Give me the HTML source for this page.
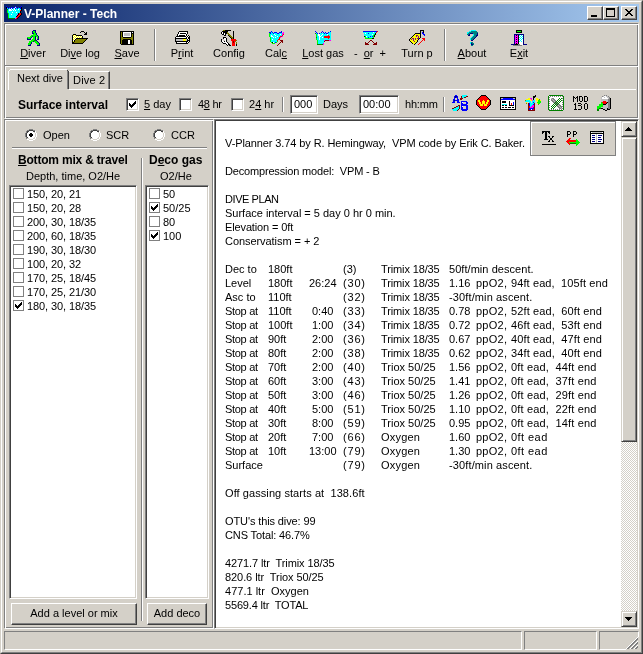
<!DOCTYPE html>
<html><head><meta charset="utf-8">
<style>
*{margin:0;padding:0;box-sizing:border-box}
html,body{width:643px;height:654px;overflow:hidden;background:#d4d0c8}
body{position:relative;font-family:"Liberation Sans",sans-serif;font-size:11px;color:#000}
.a{position:absolute}
.t{position:absolute;white-space:pre;line-height:13px;will-change:transform}
.hd{position:absolute;height:1px;background:#808080}
.hw{position:absolute;height:1px;background:#fff}
.vd{position:absolute;width:1px;background:#808080}
.vw{position:absolute;width:1px;background:#fff}
.sunk{position:absolute;border:1px solid;border-color:#808080 #fff #fff #808080;box-shadow:inset 1px 1px #404040,inset -1px -1px #d4d0c8;background:#fff}
.thin{position:absolute;border:1px solid;border-color:#808080 #fff #fff #808080}
.btn{position:absolute;border:1px solid;border-color:#fff #404040 #404040 #fff;box-shadow:inset -1px -1px #808080;background:#d4d0c8}
.cbtn{position:absolute;border:1px solid;border-color:#d4d0c8 #404040 #404040 #d4d0c8;box-shadow:inset 1px 1px #fff,inset -1px -1px #808080;background:#d4d0c8}

.u{text-decoration:underline;text-underline-offset:1px}
.b{font-weight:bold}
.lcb{position:absolute;width:11px;height:11px;border:1px solid #808080;background:#fff}
.cb{position:absolute;width:13px;height:13px;border:1px solid;border-color:#808080 #fff #fff #808080;box-shadow:inset 1px 1px #404040,inset -1px -1px #d4d0c8;background:#fff}
.lbl{position:absolute;white-space:pre;line-height:13px;text-align:center;will-change:transform}
.ic{position:absolute;width:16px;height:16px}
</style></head><body>
<!-- window frame -->
<div class="a" style="left:0;top:0;width:643px;height:654px;border-top:1px solid #d4d0c8;border-left:1px solid #d4d0c8;border-right:1px solid #404040;border-bottom:1px solid #404040"></div>
<div class="a" style="left:1px;top:1px;width:641px;height:652px;border-top:1px solid #fff;border-left:1px solid #fff;border-right:1px solid #808080;border-bottom:1px solid #808080"></div>
<!-- title bar -->
<div class="a" style="left:4px;top:4px;width:635px;height:18px;background:linear-gradient(to right,#0a246a,#a6caf0)"></div>
<div class="t b" style="left:24px;top:8px;color:#fff;font-size:12px">V-Planner - Tech</div>
<div class="btn" style="left:587px;top:6px;width:16px;height:14px"></div>
<div class="btn" style="left:603px;top:6px;width:16px;height:14px"></div>
<div class="btn" style="left:621px;top:6px;width:16px;height:14px"></div>

<!-- top etched frame -->
<div class="a" style="left:4px;top:23px;width:634px;height:95px;border:1px solid #808080"></div>
<div class="a" style="left:5px;top:24px;width:634px;height:95px;border:1px solid #fff"></div>
<div class="hd" style="left:4px;top:65px;width:634px"></div>
<div class="hw" style="left:5px;top:66px;width:633px"></div>

<!-- toolbar separators -->
<div class="vd" style="left:154px;top:29px;height:32px"></div><div class="vw" style="left:155px;top:29px;height:32px"></div>
<div class="vd" style="left:444px;top:29px;height:32px"></div><div class="vw" style="left:445px;top:29px;height:32px"></div>

<!-- toolbar labels -->
<div class="lbl" style="left:8px;top:47px;width:50px"><span class="u">D</span>iver</div>
<div class="lbl" style="left:55px;top:47px;width:50px">Di<span class="u">v</span>e log</div>
<div class="lbl" style="left:102px;top:47px;width:50px"><span class="u">S</span>ave</div>
<div class="lbl" style="left:157px;top:47px;width:50px">P<span class="u">r</span>int</div>
<div class="lbl" style="left:204px;top:47px;width:50px">Config</div>
<div class="lbl" style="left:251px;top:47px;width:50px">Cal<span class="u">c</span></div>
<div class="lbl" style="left:298px;top:47px;width:50px"><span class="u">L</span>ost gas</div>
<div class="lbl" style="left:345px;top:47px;width:50px">-  <span class="u">o</span>r  +</div>
<div class="lbl" style="left:392px;top:47px;width:50px">Turn p</div>
<div class="lbl" style="left:447px;top:47px;width:50px"><span class="u">A</span>bout</div>
<div class="lbl" style="left:494px;top:47px;width:50px">E<span class="u">x</span>it</div>

<!-- tabs -->
<div class="hw" style="left:69px;top:89px;width:567px"></div>
<div class="a" style="left:69px;top:71px;width:41px;height:18px;border-top:1px solid #fff;border-right:1px solid #404040;box-shadow:inset -1px 0 #808080"></div>
<div class="a" style="left:8px;top:69px;width:61px;height:21px;background:#d4d0c8"></div><div class="hw" style="left:10px;top:69px;width:57px"></div><div class="vw" style="left:8px;top:71px;height:19px"></div><div class="a" style="left:9px;top:70px;width:1px;height:1px;background:#fff"></div><div class="vd" style="left:67px;top:71px;height:18px"></div><div class="a" style="left:68px;top:71px;width:1px;height:18px;background:#404040"></div><div class="a" style="left:67px;top:70px;width:1px;height:1px;background:#404040"></div>
<div class="t" style="left:17px;top:72px">Next dive</div>
<div class="t" style="left:73px;top:74px;letter-spacing:0.2px">Dive 2</div>

<!-- surface interval row -->
<div class="t b" style="left:18px;top:99px;font-size:12px">Surface interval</div>
<div class="cb" style="left:126px;top:98px"></div>
<div class="t" style="left:144px;top:98px"><span class="u">5</span> day</div>
<div class="cb" style="left:179px;top:98px"></div>
<div class="t" style="left:198px;top:98px;letter-spacing:-0.3px">4<span class="u">8</span> hr</div>
<div class="cb" style="left:231px;top:98px"></div>
<div class="t" style="left:249px;top:98px">2<span class="u">4</span> hr</div>
<div class="vd" style="left:282px;top:97px;height:15px"></div><div class="vw" style="left:283px;top:97px;height:15px"></div>
<div class="sunk" style="left:290px;top:95px;width:28px;height:19px"></div>
<div class="t" style="left:294px;top:98px">000</div>
<div class="t" style="left:323px;top:98px">Days</div>
<div class="sunk" style="left:359px;top:95px;width:40px;height:19px"></div>
<div class="t" style="left:363px;top:98px">00:00</div>
<div class="t" style="left:405px;top:98px;letter-spacing:-0.2px">hh:mm</div>
<div class="vd" style="left:443px;top:97px;height:15px"></div><div class="vw" style="left:444px;top:97px;height:15px"></div>

<!-- left panel etched -->
<div class="a" style="left:4px;top:119px;width:209px;height:509px;border:1px solid #808080"></div>
<div class="a" style="left:5px;top:120px;width:209px;height:509px;border:1px solid #fff"></div>
<div class="hd" style="left:12px;top:147px;width:195px"></div>
<div class="hw" style="left:12px;top:148px;width:195px"></div>
<div class="vd" style="left:141px;top:158px;height:463px"></div>
<div class="vw" style="left:142px;top:158px;height:463px"></div>

<div class="t" style="left:43px;top:129px">Open</div>
<div class="t" style="left:106px;top:129px">SCR</div>
<div class="t" style="left:171px;top:129px">CCR</div>
<div class="t b" style="left:18px;top:154px;font-size:12px;letter-spacing:-0.2px"><span class="u">B</span>ottom mix &amp; travel</div>
<div class="t" style="left:26px;top:170px">Depth, time, O2/He</div>
<div class="t b" style="left:149px;top:154px;font-size:12px">D<span class="u">e</span>co gas</div>
<div class="t" style="left:160px;top:170px">O2/He</div>

<div class="sunk" style="left:9px;top:185px;width:128px;height:414px"></div>
<div class="sunk" style="left:145px;top:185px;width:64px;height:414px"></div>

<div class="btn" style="left:11px;top:603px;width:126px;height:22px"></div>
<div class="t" style="left:11px;top:607px;width:126px;text-align:center">Add a level or mix</div>
<div class="btn" style="left:147px;top:603px;width:60px;height:22px"></div>
<div class="t" style="left:147px;top:607px;width:60px;text-align:center">Add deco</div>

<!-- text area -->
<div class="sunk" style="left:214px;top:119px;width:425px;height:510px"></div>

<div class="t" style="left:225px;top:137px;letter-spacing:-0.103px">V-Planner 3.74 by R. Hemingway,  VPM code by Erik C. Baker.</div>
<div class="t" style="left:225px;top:165px;letter-spacing:-0.171px">Decompression model:  VPM - B</div>
<div class="t" style="left:225px;top:193px;letter-spacing:-0.425px">DIVE PLAN</div>
<div class="t" style="left:225px;top:207px;letter-spacing:-0.007px">Surface interval = 5 day 0 hr 0 min.</div>
<div class="t" style="left:225px;top:221px;letter-spacing:-0.129px">Elevation = 0ft</div>
<div class="t" style="left:225px;top:235px;letter-spacing:-0.059px">Conservatism = + 2</div>
<div class="t" style="left:225px;top:487px;letter-spacing:0.076px">Off gassing starts at  138.6ft</div>
<div class="t" style="left:225px;top:515px;letter-spacing:-0.111px">OTU's this dive: 99</div>
<div class="t" style="left:225px;top:529px;letter-spacing:-0.12px">CNS Total: 46.7%</div>
<div class="t" style="left:225px;top:557px;letter-spacing:-0.103px">4271.7 ltr  Trimix 18/35</div>
<div class="t" style="left:225px;top:571px;letter-spacing:-0.076px">820.6 ltr  Triox 50/25</div>
<div class="t" style="left:225px;top:585px;letter-spacing:0.014px">477.1 ltr  Oxygen</div>
<div class="t" style="left:225px;top:599px;letter-spacing:-0.174px">5569.4 ltr  TOTAL</div>
<div class="t" style="left:225px;top:263px;letter-spacing:0.0px">Dec to</div>
<div class="t" style="left:268px;top:263px;letter-spacing:0.0px">180ft</div>
<div class="t" style="left:343px;top:263px;letter-spacing:0.0px">(3)</div>
<div class="t" style="left:381px;top:263px;letter-spacing:-0.128px">Trimix 18/35</div>
<div class="t" style="left:449px;top:263px;letter-spacing:0.05px">50ft/min descent.</div>
<div class="t" style="left:225px;top:277px;letter-spacing:0.0px">Level</div>
<div class="t" style="left:268px;top:277px;letter-spacing:0.0px">180ft</div>
<div class="t" style="left:309px;top:277px;letter-spacing:0.0px">26:24</div>
<div class="t" style="left:343px;top:277px;letter-spacing:0.801px">(30)</div>
<div class="t" style="left:381px;top:277px;letter-spacing:-0.128px">Trimix 18/35</div>
<div class="t" style="left:449px;top:277px;letter-spacing:0.0px">1.16</div>
<div class="t" style="left:476px;top:277px;letter-spacing:0.25px">ppO2,</div>
<div class="t" style="left:511px;top:277px;letter-spacing:0.105px">94ft ead,  105ft end</div>
<div class="t" style="left:225px;top:291px;letter-spacing:0.0px">Asc to</div>
<div class="t" style="left:268px;top:291px;letter-spacing:0.0px">110ft</div>
<div class="t" style="left:343px;top:291px;letter-spacing:0.801px">(32)</div>
<div class="t" style="left:381px;top:291px;letter-spacing:-0.128px">Trimix 18/35</div>
<div class="t" style="left:449px;top:291px;letter-spacing:0.125px">-30ft/min ascent.</div>
<div class="t" style="left:225px;top:305px;letter-spacing:-0.3px">Stop at</div>
<div class="t" style="left:268px;top:305px;letter-spacing:0.0px">110ft</div>
<div class="t" style="left:312px;top:305px;letter-spacing:0.0px">0:40</div>
<div class="t" style="left:343px;top:305px;letter-spacing:0.801px">(33)</div>
<div class="t" style="left:381px;top:305px;letter-spacing:-0.128px">Trimix 18/35</div>
<div class="t" style="left:449px;top:305px;letter-spacing:0.0px">0.78</div>
<div class="t" style="left:476px;top:305px;letter-spacing:0.25px">ppO2,</div>
<div class="t" style="left:511px;top:305px;letter-spacing:0.122px">52ft ead,  60ft end</div>
<div class="t" style="left:225px;top:319px;letter-spacing:-0.3px">Stop at</div>
<div class="t" style="left:268px;top:319px;letter-spacing:0.0px">100ft</div>
<div class="t" style="left:312px;top:319px;letter-spacing:0.0px">1:00</div>
<div class="t" style="left:343px;top:319px;letter-spacing:0.801px">(34)</div>
<div class="t" style="left:381px;top:319px;letter-spacing:-0.128px">Trimix 18/35</div>
<div class="t" style="left:449px;top:319px;letter-spacing:0.0px">0.72</div>
<div class="t" style="left:476px;top:319px;letter-spacing:0.25px">ppO2,</div>
<div class="t" style="left:511px;top:319px;letter-spacing:0.122px">46ft ead,  53ft end</div>
<div class="t" style="left:225px;top:333px;letter-spacing:-0.3px">Stop at</div>
<div class="t" style="left:268px;top:333px;letter-spacing:0.0px">90ft</div>
<div class="t" style="left:312px;top:333px;letter-spacing:0.0px">2:00</div>
<div class="t" style="left:343px;top:333px;letter-spacing:0.801px">(36)</div>
<div class="t" style="left:381px;top:333px;letter-spacing:-0.128px">Trimix 18/35</div>
<div class="t" style="left:449px;top:333px;letter-spacing:0.0px">0.67</div>
<div class="t" style="left:476px;top:333px;letter-spacing:0.25px">ppO2,</div>
<div class="t" style="left:511px;top:333px;letter-spacing:0.122px">40ft ead,  47ft end</div>
<div class="t" style="left:225px;top:347px;letter-spacing:-0.3px">Stop at</div>
<div class="t" style="left:268px;top:347px;letter-spacing:0.0px">80ft</div>
<div class="t" style="left:312px;top:347px;letter-spacing:0.0px">2:00</div>
<div class="t" style="left:343px;top:347px;letter-spacing:0.801px">(38)</div>
<div class="t" style="left:381px;top:347px;letter-spacing:-0.128px">Trimix 18/35</div>
<div class="t" style="left:449px;top:347px;letter-spacing:0.0px">0.62</div>
<div class="t" style="left:476px;top:347px;letter-spacing:0.25px">ppO2,</div>
<div class="t" style="left:511px;top:347px;letter-spacing:0.122px">34ft ead,  40ft end</div>
<div class="t" style="left:225px;top:361px;letter-spacing:-0.3px">Stop at</div>
<div class="t" style="left:268px;top:361px;letter-spacing:0.0px">70ft</div>
<div class="t" style="left:312px;top:361px;letter-spacing:0.0px">2:00</div>
<div class="t" style="left:343px;top:361px;letter-spacing:0.801px">(40)</div>
<div class="t" style="left:381px;top:361px;letter-spacing:0.0px">Triox 50/25</div>
<div class="t" style="left:449px;top:361px;letter-spacing:0.0px">1.56</div>
<div class="t" style="left:476px;top:361px;letter-spacing:0.25px">ppO2,</div>
<div class="t" style="left:511px;top:361px;letter-spacing:0.165px">0ft ead,  44ft end</div>
<div class="t" style="left:225px;top:375px;letter-spacing:-0.3px">Stop at</div>
<div class="t" style="left:268px;top:375px;letter-spacing:0.0px">60ft</div>
<div class="t" style="left:312px;top:375px;letter-spacing:0.0px">3:00</div>
<div class="t" style="left:343px;top:375px;letter-spacing:0.801px">(43)</div>
<div class="t" style="left:381px;top:375px;letter-spacing:0.0px">Triox 50/25</div>
<div class="t" style="left:449px;top:375px;letter-spacing:0.0px">1.41</div>
<div class="t" style="left:476px;top:375px;letter-spacing:0.25px">ppO2,</div>
<div class="t" style="left:511px;top:375px;letter-spacing:0.165px">0ft ead,  37ft end</div>
<div class="t" style="left:225px;top:389px;letter-spacing:-0.3px">Stop at</div>
<div class="t" style="left:268px;top:389px;letter-spacing:0.0px">50ft</div>
<div class="t" style="left:312px;top:389px;letter-spacing:0.0px">3:00</div>
<div class="t" style="left:343px;top:389px;letter-spacing:0.801px">(46)</div>
<div class="t" style="left:381px;top:389px;letter-spacing:0.0px">Triox 50/25</div>
<div class="t" style="left:449px;top:389px;letter-spacing:0.0px">1.26</div>
<div class="t" style="left:476px;top:389px;letter-spacing:0.25px">ppO2,</div>
<div class="t" style="left:511px;top:389px;letter-spacing:0.165px">0ft ead,  29ft end</div>
<div class="t" style="left:225px;top:403px;letter-spacing:-0.3px">Stop at</div>
<div class="t" style="left:268px;top:403px;letter-spacing:0.0px">40ft</div>
<div class="t" style="left:312px;top:403px;letter-spacing:0.0px">5:00</div>
<div class="t" style="left:343px;top:403px;letter-spacing:0.801px">(51)</div>
<div class="t" style="left:381px;top:403px;letter-spacing:0.0px">Triox 50/25</div>
<div class="t" style="left:449px;top:403px;letter-spacing:0.0px">1.10</div>
<div class="t" style="left:476px;top:403px;letter-spacing:0.25px">ppO2,</div>
<div class="t" style="left:511px;top:403px;letter-spacing:0.165px">0ft ead,  22ft end</div>
<div class="t" style="left:225px;top:417px;letter-spacing:-0.3px">Stop at</div>
<div class="t" style="left:268px;top:417px;letter-spacing:0.0px">30ft</div>
<div class="t" style="left:312px;top:417px;letter-spacing:0.0px">8:00</div>
<div class="t" style="left:343px;top:417px;letter-spacing:0.801px">(59)</div>
<div class="t" style="left:381px;top:417px;letter-spacing:0.0px">Triox 50/25</div>
<div class="t" style="left:449px;top:417px;letter-spacing:0.0px">0.95</div>
<div class="t" style="left:476px;top:417px;letter-spacing:0.25px">ppO2,</div>
<div class="t" style="left:511px;top:417px;letter-spacing:0.165px">0ft ead,  14ft end</div>
<div class="t" style="left:225px;top:431px;letter-spacing:-0.3px">Stop at</div>
<div class="t" style="left:268px;top:431px;letter-spacing:0.0px">20ft</div>
<div class="t" style="left:312px;top:431px;letter-spacing:0.0px">7:00</div>
<div class="t" style="left:343px;top:431px;letter-spacing:0.801px">(66)</div>
<div class="t" style="left:381px;top:431px;letter-spacing:0.2px">Oxygen</div>
<div class="t" style="left:449px;top:431px;letter-spacing:0.0px">1.60</div>
<div class="t" style="left:476px;top:431px;letter-spacing:0.25px">ppO2,</div>
<div class="t" style="left:511px;top:431px;letter-spacing:0.434px">0ft ead</div>
<div class="t" style="left:225px;top:445px;letter-spacing:-0.3px">Stop at</div>
<div class="t" style="left:268px;top:445px;letter-spacing:0.0px">10ft</div>
<div class="t" style="left:309px;top:445px;letter-spacing:0.0px">13:00</div>
<div class="t" style="left:343px;top:445px;letter-spacing:0.801px">(79)</div>
<div class="t" style="left:381px;top:445px;letter-spacing:0.2px">Oxygen</div>
<div class="t" style="left:449px;top:445px;letter-spacing:0.0px">1.30</div>
<div class="t" style="left:476px;top:445px;letter-spacing:0.25px">ppO2,</div>
<div class="t" style="left:511px;top:445px;letter-spacing:0.434px">0ft ead</div>
<div class="t" style="left:225px;top:459px;letter-spacing:0.0px">Surface</div>
<div class="t" style="left:343px;top:459px;letter-spacing:0.801px">(79)</div>
<div class="t" style="left:381px;top:459px;letter-spacing:0.2px">Oxygen</div>
<div class="t" style="left:449px;top:459px;letter-spacing:0.125px">-30ft/min ascent.</div>
<!-- scrollbar -->
<div class="a" style="left:621px;top:121px;width:16px;height:506px;background:repeating-conic-gradient(#fff 0 25%,#d4d0c8 0 50%) 0 0/2px 2px"></div>
<div class="cbtn" style="left:621px;top:121px;width:16px;height:16px"></div>
<div class="cbtn" style="left:621px;top:137px;width:16px;height:305px"></div>
<div class="cbtn" style="left:621px;top:611px;width:16px;height:16px"></div>

<!-- floating box -->
<div class="a" style="left:530px;top:121px;width:86px;height:35px;border:1px solid #808080;box-shadow:inset 1px 1px #fff;background:#d4d0c8"></div>

<!-- status bar -->
<div class="thin" style="left:4px;top:631px;width:518px;height:19px"></div>
<div class="thin" style="left:524px;top:631px;width:73px;height:19px"></div>
<div class="thin" style="left:599px;top:631px;width:40px;height:19px"></div>
<svg class="a" style="left:25px;top:129px" width="12" height="12" shape-rendering="crispEdges"><rect x="4" y="0" width="4" height="1" fill="#808080"/><rect x="2" y="1" width="2" height="1" fill="#808080"/><rect x="4" y="1" width="4" height="1" fill="#404040"/><rect x="8" y="1" width="2" height="1" fill="#808080"/><rect x="1" y="2" width="1" height="1" fill="#808080"/><rect x="2" y="2" width="2" height="1" fill="#404040"/><rect x="4" y="2" width="4" height="1" fill="#fff"/><rect x="8" y="2" width="2" height="1" fill="#404040"/><rect x="10" y="2" width="1" height="1" fill="#fff"/><rect x="1" y="3" width="1" height="1" fill="#808080"/><rect x="2" y="3" width="1" height="1" fill="#404040"/><rect x="3" y="3" width="6" height="1" fill="#fff"/><rect x="9" y="3" width="1" height="1" fill="#d4d0c8"/><rect x="10" y="3" width="1" height="1" fill="#fff"/><rect x="0" y="4" width="1" height="1" fill="#808080"/><rect x="1" y="4" width="1" height="1" fill="#404040"/><rect x="2" y="4" width="3" height="1" fill="#fff"/><rect x="5" y="4" width="2" height="1" fill="#000"/><rect x="7" y="4" width="3" height="1" fill="#fff"/><rect x="10" y="4" width="1" height="1" fill="#d4d0c8"/><rect x="11" y="4" width="1" height="1" fill="#fff"/><rect x="0" y="5" width="1" height="1" fill="#808080"/><rect x="1" y="5" width="1" height="1" fill="#404040"/><rect x="2" y="5" width="2" height="1" fill="#fff"/><rect x="4" y="5" width="4" height="1" fill="#000"/><rect x="8" y="5" width="2" height="1" fill="#fff"/><rect x="10" y="5" width="1" height="1" fill="#d4d0c8"/><rect x="11" y="5" width="1" height="1" fill="#fff"/><rect x="0" y="6" width="1" height="1" fill="#808080"/><rect x="1" y="6" width="1" height="1" fill="#404040"/><rect x="2" y="6" width="2" height="1" fill="#fff"/><rect x="4" y="6" width="4" height="1" fill="#000"/><rect x="8" y="6" width="2" height="1" fill="#fff"/><rect x="10" y="6" width="1" height="1" fill="#d4d0c8"/><rect x="11" y="6" width="1" height="1" fill="#fff"/><rect x="0" y="7" width="1" height="1" fill="#808080"/><rect x="1" y="7" width="1" height="1" fill="#404040"/><rect x="2" y="7" width="3" height="1" fill="#fff"/><rect x="5" y="7" width="2" height="1" fill="#000"/><rect x="7" y="7" width="3" height="1" fill="#fff"/><rect x="10" y="7" width="1" height="1" fill="#d4d0c8"/><rect x="11" y="7" width="1" height="1" fill="#fff"/><rect x="1" y="8" width="1" height="1" fill="#808080"/><rect x="2" y="8" width="1" height="1" fill="#404040"/><rect x="3" y="8" width="6" height="1" fill="#fff"/><rect x="9" y="8" width="1" height="1" fill="#d4d0c8"/><rect x="10" y="8" width="1" height="1" fill="#fff"/><rect x="1" y="9" width="1" height="1" fill="#808080"/><rect x="2" y="9" width="2" height="1" fill="#d4d0c8"/><rect x="4" y="9" width="4" height="1" fill="#fff"/><rect x="8" y="9" width="2" height="1" fill="#d4d0c8"/><rect x="10" y="9" width="1" height="1" fill="#fff"/><rect x="2" y="10" width="2" height="1" fill="#fff"/><rect x="4" y="10" width="4" height="1" fill="#d4d0c8"/><rect x="8" y="10" width="2" height="1" fill="#fff"/><rect x="4" y="11" width="4" height="1" fill="#fff"/></svg>
<svg class="a" style="left:89px;top:129px" width="12" height="12" shape-rendering="crispEdges"><rect x="4" y="0" width="4" height="1" fill="#808080"/><rect x="2" y="1" width="2" height="1" fill="#808080"/><rect x="4" y="1" width="4" height="1" fill="#404040"/><rect x="8" y="1" width="2" height="1" fill="#808080"/><rect x="1" y="2" width="1" height="1" fill="#808080"/><rect x="2" y="2" width="2" height="1" fill="#404040"/><rect x="4" y="2" width="4" height="1" fill="#fff"/><rect x="8" y="2" width="2" height="1" fill="#404040"/><rect x="10" y="2" width="1" height="1" fill="#fff"/><rect x="1" y="3" width="1" height="1" fill="#808080"/><rect x="2" y="3" width="1" height="1" fill="#404040"/><rect x="3" y="3" width="6" height="1" fill="#fff"/><rect x="9" y="3" width="1" height="1" fill="#d4d0c8"/><rect x="10" y="3" width="1" height="1" fill="#fff"/><rect x="0" y="4" width="1" height="1" fill="#808080"/><rect x="1" y="4" width="1" height="1" fill="#404040"/><rect x="2" y="4" width="8" height="1" fill="#fff"/><rect x="10" y="4" width="1" height="1" fill="#d4d0c8"/><rect x="11" y="4" width="1" height="1" fill="#fff"/><rect x="0" y="5" width="1" height="1" fill="#808080"/><rect x="1" y="5" width="1" height="1" fill="#404040"/><rect x="2" y="5" width="8" height="1" fill="#fff"/><rect x="10" y="5" width="1" height="1" fill="#d4d0c8"/><rect x="11" y="5" width="1" height="1" fill="#fff"/><rect x="0" y="6" width="1" height="1" fill="#808080"/><rect x="1" y="6" width="1" height="1" fill="#404040"/><rect x="2" y="6" width="8" height="1" fill="#fff"/><rect x="10" y="6" width="1" height="1" fill="#d4d0c8"/><rect x="11" y="6" width="1" height="1" fill="#fff"/><rect x="0" y="7" width="1" height="1" fill="#808080"/><rect x="1" y="7" width="1" height="1" fill="#404040"/><rect x="2" y="7" width="8" height="1" fill="#fff"/><rect x="10" y="7" width="1" height="1" fill="#d4d0c8"/><rect x="11" y="7" width="1" height="1" fill="#fff"/><rect x="1" y="8" width="1" height="1" fill="#808080"/><rect x="2" y="8" width="1" height="1" fill="#404040"/><rect x="3" y="8" width="6" height="1" fill="#fff"/><rect x="9" y="8" width="1" height="1" fill="#d4d0c8"/><rect x="10" y="8" width="1" height="1" fill="#fff"/><rect x="1" y="9" width="1" height="1" fill="#808080"/><rect x="2" y="9" width="2" height="1" fill="#d4d0c8"/><rect x="4" y="9" width="4" height="1" fill="#fff"/><rect x="8" y="9" width="2" height="1" fill="#d4d0c8"/><rect x="10" y="9" width="1" height="1" fill="#fff"/><rect x="2" y="10" width="2" height="1" fill="#fff"/><rect x="4" y="10" width="4" height="1" fill="#d4d0c8"/><rect x="8" y="10" width="2" height="1" fill="#fff"/><rect x="4" y="11" width="4" height="1" fill="#fff"/></svg>
<svg class="a" style="left:153px;top:129px" width="12" height="12" shape-rendering="crispEdges"><rect x="4" y="0" width="4" height="1" fill="#808080"/><rect x="2" y="1" width="2" height="1" fill="#808080"/><rect x="4" y="1" width="4" height="1" fill="#404040"/><rect x="8" y="1" width="2" height="1" fill="#808080"/><rect x="1" y="2" width="1" height="1" fill="#808080"/><rect x="2" y="2" width="2" height="1" fill="#404040"/><rect x="4" y="2" width="4" height="1" fill="#fff"/><rect x="8" y="2" width="2" height="1" fill="#404040"/><rect x="10" y="2" width="1" height="1" fill="#fff"/><rect x="1" y="3" width="1" height="1" fill="#808080"/><rect x="2" y="3" width="1" height="1" fill="#404040"/><rect x="3" y="3" width="6" height="1" fill="#fff"/><rect x="9" y="3" width="1" height="1" fill="#d4d0c8"/><rect x="10" y="3" width="1" height="1" fill="#fff"/><rect x="0" y="4" width="1" height="1" fill="#808080"/><rect x="1" y="4" width="1" height="1" fill="#404040"/><rect x="2" y="4" width="8" height="1" fill="#fff"/><rect x="10" y="4" width="1" height="1" fill="#d4d0c8"/><rect x="11" y="4" width="1" height="1" fill="#fff"/><rect x="0" y="5" width="1" height="1" fill="#808080"/><rect x="1" y="5" width="1" height="1" fill="#404040"/><rect x="2" y="5" width="8" height="1" fill="#fff"/><rect x="10" y="5" width="1" height="1" fill="#d4d0c8"/><rect x="11" y="5" width="1" height="1" fill="#fff"/><rect x="0" y="6" width="1" height="1" fill="#808080"/><rect x="1" y="6" width="1" height="1" fill="#404040"/><rect x="2" y="6" width="8" height="1" fill="#fff"/><rect x="10" y="6" width="1" height="1" fill="#d4d0c8"/><rect x="11" y="6" width="1" height="1" fill="#fff"/><rect x="0" y="7" width="1" height="1" fill="#808080"/><rect x="1" y="7" width="1" height="1" fill="#404040"/><rect x="2" y="7" width="8" height="1" fill="#fff"/><rect x="10" y="7" width="1" height="1" fill="#d4d0c8"/><rect x="11" y="7" width="1" height="1" fill="#fff"/><rect x="1" y="8" width="1" height="1" fill="#808080"/><rect x="2" y="8" width="1" height="1" fill="#404040"/><rect x="3" y="8" width="6" height="1" fill="#fff"/><rect x="9" y="8" width="1" height="1" fill="#d4d0c8"/><rect x="10" y="8" width="1" height="1" fill="#fff"/><rect x="1" y="9" width="1" height="1" fill="#808080"/><rect x="2" y="9" width="2" height="1" fill="#d4d0c8"/><rect x="4" y="9" width="4" height="1" fill="#fff"/><rect x="8" y="9" width="2" height="1" fill="#d4d0c8"/><rect x="10" y="9" width="1" height="1" fill="#fff"/><rect x="2" y="10" width="2" height="1" fill="#fff"/><rect x="4" y="10" width="4" height="1" fill="#d4d0c8"/><rect x="8" y="10" width="2" height="1" fill="#fff"/><rect x="4" y="11" width="4" height="1" fill="#fff"/></svg>
<svg class="a" style="left:129px;top:101px" width="7" height="7" shape-rendering="crispEdges"><rect x="6" y="0" width="1" height="1" fill="#000"/><rect x="5" y="1" width="2" height="1" fill="#000"/><rect x="0" y="2" width="1" height="1" fill="#000"/><rect x="4" y="2" width="3" height="1" fill="#000"/><rect x="0" y="3" width="2" height="1" fill="#000"/><rect x="3" y="3" width="3" height="1" fill="#000"/><rect x="0" y="4" width="5" height="1" fill="#000"/><rect x="1" y="5" width="3" height="1" fill="#000"/><rect x="2" y="6" width="1" height="1" fill="#000"/></svg>
<div class="lcb" style="left:13px;top:188px"></div>
<div class="t" style="left:27px;top:188px;letter-spacing:-0.1px">150, 20, 21</div>
<div class="lcb" style="left:13px;top:202px"></div>
<div class="t" style="left:27px;top:202px;letter-spacing:-0.1px">150, 20, 28</div>
<div class="lcb" style="left:13px;top:216px"></div>
<div class="t" style="left:27px;top:216px;letter-spacing:-0.1px">200, 30, 18/35</div>
<div class="lcb" style="left:13px;top:230px"></div>
<div class="t" style="left:27px;top:230px;letter-spacing:-0.1px">200, 60, 18/35</div>
<div class="lcb" style="left:13px;top:244px"></div>
<div class="t" style="left:27px;top:244px;letter-spacing:-0.1px">190, 30, 18/30</div>
<div class="lcb" style="left:13px;top:258px"></div>
<div class="t" style="left:27px;top:258px;letter-spacing:-0.1px">100, 20, 32</div>
<div class="lcb" style="left:13px;top:272px"></div>
<div class="t" style="left:27px;top:272px;letter-spacing:-0.1px">170, 25, 18/45</div>
<div class="lcb" style="left:13px;top:286px"></div>
<div class="t" style="left:27px;top:286px;letter-spacing:-0.1px">170, 25, 21/30</div>
<div class="lcb" style="left:13px;top:300px"></div>
<svg class="a" style="left:15px;top:302px" width="7" height="7" shape-rendering="crispEdges"><rect x="6" y="0" width="1" height="1" fill="#000"/><rect x="5" y="1" width="2" height="1" fill="#000"/><rect x="0" y="2" width="1" height="1" fill="#000"/><rect x="4" y="2" width="3" height="1" fill="#000"/><rect x="0" y="3" width="2" height="1" fill="#000"/><rect x="3" y="3" width="3" height="1" fill="#000"/><rect x="0" y="4" width="5" height="1" fill="#000"/><rect x="1" y="5" width="3" height="1" fill="#000"/><rect x="2" y="6" width="1" height="1" fill="#000"/></svg>
<div class="t" style="left:27px;top:300px;letter-spacing:-0.1px">180, 30, 18/35</div>
<div class="lcb" style="left:149px;top:188px"></div>
<div class="t" style="left:163px;top:188px">50</div>
<div class="lcb" style="left:149px;top:202px"></div>
<svg class="a" style="left:151px;top:204px" width="7" height="7" shape-rendering="crispEdges"><rect x="6" y="0" width="1" height="1" fill="#000"/><rect x="5" y="1" width="2" height="1" fill="#000"/><rect x="0" y="2" width="1" height="1" fill="#000"/><rect x="4" y="2" width="3" height="1" fill="#000"/><rect x="0" y="3" width="2" height="1" fill="#000"/><rect x="3" y="3" width="3" height="1" fill="#000"/><rect x="0" y="4" width="5" height="1" fill="#000"/><rect x="1" y="5" width="3" height="1" fill="#000"/><rect x="2" y="6" width="1" height="1" fill="#000"/></svg>
<div class="t" style="left:163px;top:202px">50/25</div>
<div class="lcb" style="left:149px;top:216px"></div>
<div class="t" style="left:163px;top:216px">80</div>
<div class="lcb" style="left:149px;top:230px"></div>
<svg class="a" style="left:151px;top:232px" width="7" height="7" shape-rendering="crispEdges"><rect x="6" y="0" width="1" height="1" fill="#000"/><rect x="5" y="1" width="2" height="1" fill="#000"/><rect x="0" y="2" width="1" height="1" fill="#000"/><rect x="4" y="2" width="3" height="1" fill="#000"/><rect x="0" y="3" width="2" height="1" fill="#000"/><rect x="3" y="3" width="3" height="1" fill="#000"/><rect x="0" y="4" width="5" height="1" fill="#000"/><rect x="1" y="5" width="3" height="1" fill="#000"/><rect x="2" y="6" width="1" height="1" fill="#000"/></svg>
<div class="t" style="left:163px;top:230px">100</div>
<svg class="a" style="left:591px;top:15px" width="6" height="2" shape-rendering="crispEdges"><rect x="0" y="0" width="6" height="1" fill="#000"/><rect x="0" y="1" width="6" height="1" fill="#000"/></svg>
<svg class="a" style="left:606px;top:8px" width="9" height="9" shape-rendering="crispEdges"><rect x="0" y="0" width="9" height="1" fill="#000"/><rect x="0" y="1" width="9" height="1" fill="#000"/><rect x="0" y="2" width="1" height="1" fill="#000"/><rect x="8" y="2" width="1" height="1" fill="#000"/><rect x="0" y="3" width="1" height="1" fill="#000"/><rect x="8" y="3" width="1" height="1" fill="#000"/><rect x="0" y="4" width="1" height="1" fill="#000"/><rect x="8" y="4" width="1" height="1" fill="#000"/><rect x="0" y="5" width="1" height="1" fill="#000"/><rect x="8" y="5" width="1" height="1" fill="#000"/><rect x="0" y="6" width="1" height="1" fill="#000"/><rect x="8" y="6" width="1" height="1" fill="#000"/><rect x="0" y="7" width="1" height="1" fill="#000"/><rect x="8" y="7" width="1" height="1" fill="#000"/><rect x="0" y="8" width="9" height="1" fill="#000"/></svg>
<svg class="a" style="left:625px;top:9px" width="8" height="7" shape-rendering="crispEdges"><rect x="0" y="0" width="2" height="1" fill="#000"/><rect x="6" y="0" width="2" height="1" fill="#000"/><rect x="1" y="1" width="2" height="1" fill="#000"/><rect x="5" y="1" width="2" height="1" fill="#000"/><rect x="2" y="2" width="4" height="1" fill="#000"/><rect x="3" y="3" width="2" height="1" fill="#000"/><rect x="2" y="4" width="4" height="1" fill="#000"/><rect x="1" y="5" width="2" height="1" fill="#000"/><rect x="5" y="5" width="2" height="1" fill="#000"/><rect x="0" y="6" width="2" height="1" fill="#000"/><rect x="6" y="6" width="2" height="1" fill="#000"/></svg>
<svg class="a" style="left:625px;top:127px" width="7" height="4" shape-rendering="crispEdges"><rect x="3" y="0" width="1" height="1" fill="#000"/><rect x="2" y="1" width="3" height="1" fill="#000"/><rect x="1" y="2" width="5" height="1" fill="#000"/><rect x="0" y="3" width="7" height="1" fill="#000"/></svg>
<svg class="a" style="left:625px;top:617px" width="7" height="4" shape-rendering="crispEdges"><rect x="0" y="0" width="7" height="1" fill="#000"/><rect x="1" y="1" width="5" height="1" fill="#000"/><rect x="2" y="2" width="3" height="1" fill="#000"/><rect x="3" y="3" width="1" height="1" fill="#000"/></svg>
<svg class="a" style="left:6px;top:6px" width="16" height="13" shape-rendering="crispEdges"><rect x="0" y="0" width="1" height="1" fill="#0000ff"/><rect x="9" y="0" width="1" height="1" fill="#0000ff"/><rect x="15" y="0" width="1" height="1" fill="#0000ff"/><rect x="0" y="1" width="1" height="1" fill="#000"/><rect x="1" y="1" width="1" height="1" fill="#0000ff"/><rect x="3" y="1" width="1" height="1" fill="#0000ff"/><rect x="5" y="1" width="2" height="1" fill="#0000ff"/><rect x="8" y="1" width="1" height="1" fill="#0000ff"/><rect x="9" y="1" width="1" height="1" fill="#fff"/><rect x="10" y="1" width="1" height="1" fill="#0000ff"/><rect x="12" y="1" width="1" height="1" fill="#0000ff"/><rect x="14" y="1" width="1" height="1" fill="#0000ff"/><rect x="15" y="1" width="1" height="1" fill="#000"/><rect x="0" y="2" width="1" height="1" fill="#000"/><rect x="1" y="2" width="1" height="1" fill="#00ffff"/><rect x="2" y="2" width="1" height="1" fill="#0000ff"/><rect x="3" y="2" width="1" height="1" fill="#00ffff"/><rect x="4" y="2" width="1" height="1" fill="#0000ff"/><rect x="5" y="2" width="1" height="1" fill="#fff"/><rect x="6" y="2" width="1" height="1" fill="#0000ff"/><rect x="7" y="2" width="1" height="1" fill="#00ffff"/><rect x="8" y="2" width="1" height="1" fill="#fff"/><rect x="9" y="2" width="1" height="1" fill="#0000ff"/><rect x="10" y="2" width="1" height="1" fill="#00ffff"/><rect x="11" y="2" width="1" height="1" fill="#0000ff"/><rect x="12" y="2" width="2" height="1" fill="#00ffff"/><rect x="14" y="2" width="1" height="1" fill="#0000ff"/><rect x="15" y="2" width="1" height="1" fill="#000"/><rect x="1" y="3" width="1" height="1" fill="#008000"/><rect x="2" y="3" width="1" height="1" fill="#00ffff"/><rect x="3" y="3" width="2" height="1" fill="#fff"/><rect x="5" y="3" width="1" height="1" fill="#00ffff"/><rect x="6" y="3" width="1" height="1" fill="#fff"/><rect x="7" y="3" width="1" height="1" fill="#00ffff"/><rect x="8" y="3" width="1" height="1" fill="#fff"/><rect x="9" y="3" width="3" height="1" fill="#00ffff"/><rect x="12" y="3" width="1" height="1" fill="#fff"/><rect x="13" y="3" width="2" height="1" fill="#00ffff"/><rect x="15" y="3" width="1" height="1" fill="#000"/><rect x="1" y="4" width="1" height="1" fill="#00ff00"/><rect x="2" y="4" width="1" height="1" fill="#00ffff"/><rect x="3" y="4" width="3" height="1" fill="#fff"/><rect x="6" y="4" width="1" height="1" fill="#00ffff"/><rect x="7" y="4" width="1" height="1" fill="#fff"/><rect x="8" y="4" width="1" height="1" fill="#00ffff"/><rect x="9" y="4" width="1" height="1" fill="#fff"/><rect x="10" y="4" width="4" height="1" fill="#00ffff"/><rect x="14" y="4" width="1" height="1" fill="#ff0000"/><rect x="15" y="4" width="1" height="1" fill="#000"/><rect x="1" y="5" width="1" height="1" fill="#00ff00"/><rect x="2" y="5" width="12" height="1" fill="#00ffff"/><rect x="14" y="5" width="1" height="1" fill="#000"/><rect x="1" y="6" width="1" height="1" fill="#00ff00"/><rect x="2" y="6" width="4" height="1" fill="#00ffff"/><rect x="6" y="6" width="1" height="1" fill="#fff"/><rect x="7" y="6" width="3" height="1" fill="#00ffff"/><rect x="10" y="6" width="1" height="1" fill="#fff"/><rect x="11" y="6" width="3" height="1" fill="#00ffff"/><rect x="14" y="6" width="1" height="1" fill="#000"/><rect x="2" y="7" width="1" height="1" fill="#00ff00"/><rect x="3" y="7" width="9" height="1" fill="#00ffff"/><rect x="12" y="7" width="1" height="1" fill="#000"/><rect x="13" y="7" width="2" height="1" fill="#ff0000"/><rect x="15" y="7" width="1" height="1" fill="#000"/><rect x="2" y="8" width="1" height="1" fill="#00ff00"/><rect x="3" y="8" width="2" height="1" fill="#00ffff"/><rect x="5" y="8" width="1" height="1" fill="#fff"/><rect x="6" y="8" width="5" height="1" fill="#00ffff"/><rect x="11" y="8" width="1" height="1" fill="#ff00ff"/><rect x="12" y="8" width="1" height="1" fill="#000"/><rect x="13" y="8" width="2" height="1" fill="#ff0000"/><rect x="15" y="8" width="1" height="1" fill="#000"/><rect x="2" y="9" width="1" height="1" fill="#00ff00"/><rect x="3" y="9" width="8" height="1" fill="#00ffff"/><rect x="11" y="9" width="1" height="1" fill="#000"/><rect x="12" y="9" width="2" height="1" fill="#ff0000"/><rect x="14" y="9" width="1" height="1" fill="#000"/><rect x="2" y="10" width="1" height="1" fill="#00ff00"/><rect x="3" y="10" width="7" height="1" fill="#00ffff"/><rect x="10" y="10" width="1" height="1" fill="#000"/><rect x="11" y="10" width="2" height="1" fill="#ff0000"/><rect x="13" y="10" width="1" height="1" fill="#000"/><rect x="2" y="11" width="1" height="1" fill="#00ff00"/><rect x="3" y="11" width="7" height="1" fill="#00ffff"/><rect x="10" y="11" width="1" height="1" fill="#ff00ff"/><rect x="11" y="11" width="1" height="1" fill="#ff0000"/><rect x="12" y="11" width="1" height="1" fill="#000"/><rect x="2" y="12" width="7" height="1" fill="#008000"/><rect x="9" y="12" width="1" height="1" fill="#ff00ff"/><rect x="10" y="12" width="1" height="1" fill="#ff0000"/><rect x="11" y="12" width="1" height="1" fill="#000"/></svg>
<svg class="a" style="left:24px;top:30px" width="16" height="16" shape-rendering="crispEdges"><rect x="9" y="0" width="3" height="1" fill="#000080"/><rect x="8" y="1" width="1" height="1" fill="#000080"/><rect x="9" y="1" width="2" height="1" fill="#00ff00"/><rect x="11" y="1" width="1" height="1" fill="#000080"/><rect x="8" y="2" width="1" height="1" fill="#000080"/><rect x="9" y="2" width="2" height="1" fill="#00ff00"/><rect x="11" y="2" width="1" height="1" fill="#000080"/><rect x="8" y="3" width="2" height="1" fill="#000080"/><rect x="10" y="3" width="2" height="1" fill="#00ff00"/><rect x="12" y="3" width="1" height="1" fill="#000080"/><rect x="9" y="4" width="3" height="1" fill="#00ff00"/><rect x="12" y="4" width="1" height="1" fill="#000080"/><rect x="7" y="5" width="6" height="1" fill="#00ff00"/><rect x="13" y="5" width="1" height="1" fill="#000080"/><rect x="6" y="6" width="2" height="1" fill="#00ff00"/><rect x="8" y="6" width="1" height="1" fill="#000080"/><rect x="9" y="6" width="2" height="1" fill="#00ff00"/><rect x="11" y="6" width="1" height="1" fill="#000080"/><rect x="12" y="6" width="2" height="1" fill="#00ff00"/><rect x="14" y="6" width="1" height="1" fill="#000080"/><rect x="3" y="7" width="4" height="1" fill="#00ff00"/><rect x="7" y="7" width="1" height="1" fill="#000080"/><rect x="9" y="7" width="2" height="1" fill="#00ff00"/><rect x="11" y="7" width="1" height="1" fill="#000080"/><rect x="13" y="7" width="1" height="1" fill="#00ff00"/><rect x="14" y="7" width="1" height="1" fill="#000080"/><rect x="3" y="8" width="1" height="1" fill="#000080"/><rect x="4" y="8" width="2" height="1" fill="#00ff00"/><rect x="6" y="8" width="1" height="1" fill="#000080"/><rect x="9" y="8" width="2" height="1" fill="#00ff00"/><rect x="11" y="8" width="1" height="1" fill="#000080"/><rect x="13" y="8" width="1" height="1" fill="#00ff00"/><rect x="14" y="8" width="1" height="1" fill="#000080"/><rect x="3" y="9" width="4" height="1" fill="#000080"/><rect x="8" y="9" width="3" height="1" fill="#00ff00"/><rect x="11" y="9" width="1" height="1" fill="#000080"/><rect x="13" y="9" width="2" height="1" fill="#000080"/><rect x="7" y="10" width="3" height="1" fill="#00ff00"/><rect x="10" y="10" width="2" height="1" fill="#008000"/><rect x="12" y="10" width="1" height="1" fill="#000080"/><rect x="5" y="11" width="4" height="1" fill="#00ff00"/><rect x="9" y="11" width="1" height="1" fill="#000080"/><rect x="10" y="11" width="3" height="1" fill="#00ff00"/><rect x="13" y="11" width="1" height="1" fill="#000080"/><rect x="5" y="12" width="2" height="1" fill="#00ff00"/><rect x="7" y="12" width="1" height="1" fill="#000080"/><rect x="11" y="12" width="3" height="1" fill="#00ff00"/><rect x="14" y="12" width="1" height="1" fill="#000080"/><rect x="4" y="13" width="3" height="1" fill="#00ff00"/><rect x="7" y="13" width="1" height="1" fill="#000080"/><rect x="12" y="13" width="3" height="1" fill="#00ff00"/><rect x="15" y="13" width="1" height="1" fill="#000080"/><rect x="4" y="14" width="2" height="1" fill="#00ff00"/><rect x="6" y="14" width="1" height="1" fill="#000080"/><rect x="13" y="14" width="2" height="1" fill="#00ff00"/><rect x="15" y="14" width="1" height="1" fill="#000080"/><rect x="4" y="15" width="3" height="1" fill="#000080"/><rect x="13" y="15" width="3" height="1" fill="#000080"/></svg>
<svg class="a" style="left:72px;top:31px" width="16" height="13" shape-rendering="crispEdges"><rect x="9" y="0" width="3" height="1" fill="#000"/><rect x="8" y="1" width="1" height="1" fill="#000"/><rect x="12" y="1" width="1" height="1" fill="#000"/><rect x="14" y="1" width="1" height="1" fill="#000"/><rect x="13" y="2" width="2" height="1" fill="#000"/><rect x="1" y="3" width="3" height="1" fill="#000"/><rect x="12" y="3" width="3" height="1" fill="#000"/><rect x="0" y="4" width="1" height="1" fill="#000"/><rect x="1" y="4" width="1" height="1" fill="#ffff00"/><rect x="2" y="4" width="1" height="1" fill="#fff"/><rect x="3" y="4" width="1" height="1" fill="#ffff00"/><rect x="4" y="4" width="6" height="1" fill="#000"/><rect x="0" y="5" width="1" height="1" fill="#000"/><rect x="1" y="5" width="1" height="1" fill="#fff"/><rect x="2" y="5" width="1" height="1" fill="#ffff00"/><rect x="3" y="5" width="1" height="1" fill="#fff"/><rect x="4" y="5" width="1" height="1" fill="#ffff00"/><rect x="5" y="5" width="1" height="1" fill="#fff"/><rect x="6" y="5" width="1" height="1" fill="#ffff00"/><rect x="7" y="5" width="1" height="1" fill="#fff"/><rect x="8" y="5" width="1" height="1" fill="#ffff00"/><rect x="9" y="5" width="1" height="1" fill="#fff"/><rect x="10" y="5" width="1" height="1" fill="#000"/><rect x="0" y="6" width="1" height="1" fill="#000"/><rect x="1" y="6" width="1" height="1" fill="#ffff00"/><rect x="2" y="6" width="1" height="1" fill="#fff"/><rect x="3" y="6" width="1" height="1" fill="#ffff00"/><rect x="4" y="6" width="1" height="1" fill="#fff"/><rect x="5" y="6" width="1" height="1" fill="#ffff00"/><rect x="6" y="6" width="1" height="1" fill="#fff"/><rect x="7" y="6" width="1" height="1" fill="#ffff00"/><rect x="8" y="6" width="1" height="1" fill="#fff"/><rect x="9" y="6" width="1" height="1" fill="#ffff00"/><rect x="10" y="6" width="1" height="1" fill="#000"/><rect x="0" y="7" width="1" height="1" fill="#000"/><rect x="1" y="7" width="1" height="1" fill="#fff"/><rect x="2" y="7" width="1" height="1" fill="#ffff00"/><rect x="3" y="7" width="1" height="1" fill="#fff"/><rect x="4" y="7" width="12" height="1" fill="#000"/><rect x="0" y="8" width="1" height="1" fill="#000"/><rect x="1" y="8" width="1" height="1" fill="#ffff00"/><rect x="2" y="8" width="1" height="1" fill="#fff"/><rect x="3" y="8" width="1" height="1" fill="#000"/><rect x="4" y="8" width="10" height="1" fill="#808000"/><rect x="14" y="8" width="1" height="1" fill="#000"/><rect x="0" y="9" width="1" height="1" fill="#000"/><rect x="1" y="9" width="1" height="1" fill="#fff"/><rect x="2" y="9" width="1" height="1" fill="#000"/><rect x="3" y="9" width="10" height="1" fill="#808000"/><rect x="13" y="9" width="1" height="1" fill="#000"/><rect x="0" y="10" width="1" height="1" fill="#000"/><rect x="1" y="10" width="1" height="1" fill="#ffff00"/><rect x="2" y="10" width="1" height="1" fill="#000"/><rect x="3" y="10" width="9" height="1" fill="#808000"/><rect x="12" y="10" width="1" height="1" fill="#000"/><rect x="0" y="11" width="2" height="1" fill="#000"/><rect x="2" y="11" width="9" height="1" fill="#808000"/><rect x="11" y="11" width="1" height="1" fill="#000"/><rect x="0" y="12" width="11" height="1" fill="#000"/></svg>
<svg class="a" style="left:120px;top:31px" width="14" height="14" shape-rendering="crispEdges"><rect x="0" y="0" width="14" height="1" fill="#000"/><rect x="0" y="1" width="1" height="1" fill="#000"/><rect x="1" y="1" width="1" height="1" fill="#808000"/><rect x="2" y="1" width="1" height="1" fill="#000"/><rect x="3" y="1" width="8" height="1" fill="#fff"/><rect x="11" y="1" width="1" height="1" fill="#000"/><rect x="12" y="1" width="1" height="1" fill="#fff"/><rect x="13" y="1" width="1" height="1" fill="#000"/><rect x="0" y="2" width="1" height="1" fill="#000"/><rect x="1" y="2" width="1" height="1" fill="#808000"/><rect x="2" y="2" width="1" height="1" fill="#000"/><rect x="3" y="2" width="1" height="1" fill="#fff"/><rect x="4" y="2" width="6" height="1" fill="#c0c0c0"/><rect x="10" y="2" width="1" height="1" fill="#fff"/><rect x="11" y="2" width="3" height="1" fill="#000"/><rect x="0" y="3" width="1" height="1" fill="#000"/><rect x="1" y="3" width="1" height="1" fill="#808000"/><rect x="2" y="3" width="1" height="1" fill="#000"/><rect x="3" y="3" width="1" height="1" fill="#fff"/><rect x="4" y="3" width="6" height="1" fill="#c0c0c0"/><rect x="10" y="3" width="1" height="1" fill="#fff"/><rect x="11" y="3" width="1" height="1" fill="#000"/><rect x="12" y="3" width="1" height="1" fill="#808000"/><rect x="13" y="3" width="1" height="1" fill="#000"/><rect x="0" y="4" width="1" height="1" fill="#000"/><rect x="1" y="4" width="1" height="1" fill="#808000"/><rect x="2" y="4" width="1" height="1" fill="#000"/><rect x="3" y="4" width="1" height="1" fill="#fff"/><rect x="4" y="4" width="6" height="1" fill="#c0c0c0"/><rect x="10" y="4" width="1" height="1" fill="#fff"/><rect x="11" y="4" width="1" height="1" fill="#000"/><rect x="12" y="4" width="1" height="1" fill="#808000"/><rect x="13" y="4" width="1" height="1" fill="#000"/><rect x="0" y="5" width="1" height="1" fill="#000"/><rect x="1" y="5" width="1" height="1" fill="#808000"/><rect x="2" y="5" width="1" height="1" fill="#000"/><rect x="3" y="5" width="8" height="1" fill="#fff"/><rect x="11" y="5" width="1" height="1" fill="#000"/><rect x="12" y="5" width="1" height="1" fill="#808000"/><rect x="13" y="5" width="1" height="1" fill="#000"/><rect x="0" y="6" width="1" height="1" fill="#000"/><rect x="1" y="6" width="2" height="1" fill="#808000"/><rect x="3" y="6" width="8" height="1" fill="#000"/><rect x="11" y="6" width="2" height="1" fill="#808000"/><rect x="13" y="6" width="1" height="1" fill="#000"/><rect x="0" y="7" width="1" height="1" fill="#000"/><rect x="1" y="7" width="12" height="1" fill="#808000"/><rect x="13" y="7" width="1" height="1" fill="#000"/><rect x="0" y="8" width="1" height="1" fill="#000"/><rect x="1" y="8" width="2" height="1" fill="#808000"/><rect x="3" y="8" width="8" height="1" fill="#000"/><rect x="11" y="8" width="2" height="1" fill="#808000"/><rect x="13" y="8" width="1" height="1" fill="#000"/><rect x="0" y="9" width="1" height="1" fill="#000"/><rect x="1" y="9" width="1" height="1" fill="#808000"/><rect x="2" y="9" width="6" height="1" fill="#000"/><rect x="8" y="9" width="2" height="1" fill="#fff"/><rect x="10" y="9" width="2" height="1" fill="#000"/><rect x="12" y="9" width="1" height="1" fill="#808000"/><rect x="13" y="9" width="1" height="1" fill="#000"/><rect x="0" y="10" width="1" height="1" fill="#000"/><rect x="1" y="10" width="1" height="1" fill="#808000"/><rect x="2" y="10" width="6" height="1" fill="#000"/><rect x="8" y="10" width="2" height="1" fill="#fff"/><rect x="10" y="10" width="2" height="1" fill="#000"/><rect x="12" y="10" width="1" height="1" fill="#808000"/><rect x="13" y="10" width="1" height="1" fill="#000"/><rect x="0" y="11" width="1" height="1" fill="#000"/><rect x="1" y="11" width="1" height="1" fill="#808000"/><rect x="2" y="11" width="6" height="1" fill="#000"/><rect x="8" y="11" width="2" height="1" fill="#fff"/><rect x="10" y="11" width="2" height="1" fill="#000"/><rect x="12" y="11" width="1" height="1" fill="#808000"/><rect x="13" y="11" width="1" height="1" fill="#000"/><rect x="0" y="12" width="1" height="1" fill="#000"/><rect x="1" y="12" width="1" height="1" fill="#808000"/><rect x="2" y="12" width="6" height="1" fill="#000"/><rect x="8" y="12" width="2" height="1" fill="#fff"/><rect x="10" y="12" width="2" height="1" fill="#000"/><rect x="12" y="12" width="1" height="1" fill="#808000"/><rect x="13" y="12" width="1" height="1" fill="#000"/><rect x="1" y="13" width="13" height="1" fill="#000"/></svg>
<svg class="a" style="left:174px;top:31px" width="16" height="13" shape-rendering="crispEdges"><rect x="5" y="0" width="9" height="1" fill="#000"/><rect x="4" y="1" width="1" height="1" fill="#000"/><rect x="5" y="1" width="8" height="1" fill="#fff"/><rect x="13" y="1" width="1" height="1" fill="#000"/><rect x="4" y="2" width="1" height="1" fill="#000"/><rect x="5" y="2" width="1" height="1" fill="#fff"/><rect x="6" y="2" width="6" height="1" fill="#000"/><rect x="12" y="2" width="1" height="1" fill="#fff"/><rect x="13" y="2" width="1" height="1" fill="#000"/><rect x="3" y="3" width="1" height="1" fill="#000"/><rect x="4" y="3" width="8" height="1" fill="#fff"/><rect x="12" y="3" width="1" height="1" fill="#000"/><rect x="3" y="4" width="1" height="1" fill="#000"/><rect x="4" y="4" width="1" height="1" fill="#fff"/><rect x="5" y="4" width="6" height="1" fill="#000"/><rect x="11" y="4" width="1" height="1" fill="#fff"/><rect x="12" y="4" width="1" height="1" fill="#000"/><rect x="13" y="4" width="1" height="1" fill="#fff"/><rect x="14" y="4" width="1" height="1" fill="#000"/><rect x="2" y="5" width="10" height="1" fill="#000"/><rect x="12" y="5" width="1" height="1" fill="#fff"/><rect x="13" y="5" width="1" height="1" fill="#000"/><rect x="14" y="5" width="1" height="1" fill="#fff"/><rect x="15" y="5" width="1" height="1" fill="#000"/><rect x="1" y="6" width="1" height="1" fill="#000"/><rect x="2" y="6" width="10" height="1" fill="#fff"/><rect x="12" y="6" width="1" height="1" fill="#000"/><rect x="13" y="6" width="1" height="1" fill="#fff"/><rect x="14" y="6" width="2" height="1" fill="#000"/><rect x="1" y="7" width="12" height="1" fill="#000"/><rect x="13" y="7" width="1" height="1" fill="#fff"/><rect x="14" y="7" width="2" height="1" fill="#000"/><rect x="1" y="8" width="1" height="1" fill="#000"/><rect x="2" y="8" width="7" height="1" fill="#c0c0c0"/><rect x="9" y="8" width="3" height="1" fill="#ffff00"/><rect x="12" y="8" width="1" height="1" fill="#c0c0c0"/><rect x="13" y="8" width="1" height="1" fill="#000"/><rect x="14" y="8" width="1" height="1" fill="#fff"/><rect x="15" y="8" width="1" height="1" fill="#000"/><rect x="1" y="9" width="1" height="1" fill="#000"/><rect x="2" y="9" width="7" height="1" fill="#c0c0c0"/><rect x="9" y="9" width="3" height="1" fill="#ffff00"/><rect x="12" y="9" width="1" height="1" fill="#c0c0c0"/><rect x="13" y="9" width="3" height="1" fill="#000"/><rect x="1" y="10" width="13" height="1" fill="#000"/><rect x="14" y="10" width="1" height="1" fill="#fff"/><rect x="15" y="10" width="1" height="1" fill="#000"/><rect x="2" y="11" width="1" height="1" fill="#000"/><rect x="3" y="11" width="9" height="1" fill="#fff"/><rect x="12" y="11" width="1" height="1" fill="#000"/><rect x="13" y="11" width="1" height="1" fill="#fff"/><rect x="14" y="11" width="1" height="1" fill="#000"/><rect x="2" y="12" width="12" height="1" fill="#000"/></svg>
<svg class="a" style="left:221px;top:30px" width="16" height="16" shape-rendering="crispEdges"><rect x="2" y="0" width="2" height="1" fill="#808000"/><rect x="4" y="0" width="6" height="1" fill="#000"/><rect x="1" y="1" width="6" height="1" fill="#000"/><rect x="12" y="1" width="1" height="1" fill="#000"/><rect x="0" y="2" width="1" height="1" fill="#000"/><rect x="1" y="2" width="1" height="1" fill="#fff"/><rect x="2" y="2" width="4" height="1" fill="#000"/><rect x="6" y="2" width="1" height="1" fill="#808000"/><rect x="12" y="2" width="1" height="1" fill="#000"/><rect x="0" y="3" width="1" height="1" fill="#000"/><rect x="1" y="3" width="1" height="1" fill="#fff"/><rect x="2" y="3" width="1" height="1" fill="#000"/><rect x="3" y="3" width="1" height="1" fill="#fff"/><rect x="4" y="3" width="2" height="1" fill="#000"/><rect x="6" y="3" width="2" height="1" fill="#808000"/><rect x="12" y="3" width="1" height="1" fill="#000"/><rect x="1" y="4" width="2" height="1" fill="#000"/><rect x="3" y="4" width="1" height="1" fill="#fff"/><rect x="4" y="4" width="1" height="1" fill="#000"/><rect x="7" y="4" width="2" height="1" fill="#808000"/><rect x="12" y="4" width="1" height="1" fill="#000"/><rect x="3" y="5" width="2" height="1" fill="#000"/><rect x="7" y="5" width="1" height="1" fill="#000"/><rect x="8" y="5" width="2" height="1" fill="#808000"/><rect x="12" y="5" width="1" height="1" fill="#000"/><rect x="8" y="6" width="1" height="1" fill="#000"/><rect x="9" y="6" width="2" height="1" fill="#808000"/><rect x="12" y="6" width="1" height="1" fill="#000"/><rect x="2" y="7" width="3" height="1" fill="#000"/><rect x="9" y="7" width="1" height="1" fill="#000"/><rect x="10" y="7" width="2" height="1" fill="#808000"/><rect x="12" y="7" width="1" height="1" fill="#000"/><rect x="2" y="8" width="1" height="1" fill="#000"/><rect x="3" y="8" width="2" height="1" fill="#fff"/><rect x="5" y="8" width="1" height="1" fill="#000"/><rect x="10" y="8" width="1" height="1" fill="#000"/><rect x="11" y="8" width="1" height="1" fill="#808000"/><rect x="12" y="8" width="1" height="1" fill="#000"/><rect x="0" y="9" width="1" height="1" fill="#000"/><rect x="3" y="9" width="2" height="1" fill="#fff"/><rect x="5" y="9" width="1" height="1" fill="#000"/><rect x="10" y="9" width="5" height="1" fill="#ff0000"/><rect x="0" y="10" width="1" height="1" fill="#000"/><rect x="1" y="10" width="1" height="1" fill="#fff"/><rect x="4" y="10" width="1" height="1" fill="#fff"/><rect x="5" y="10" width="1" height="1" fill="#000"/><rect x="10" y="10" width="5" height="1" fill="#ff0000"/><rect x="15" y="10" width="1" height="1" fill="#808000"/><rect x="0" y="11" width="1" height="1" fill="#000"/><rect x="1" y="11" width="2" height="1" fill="#fff"/><rect x="3" y="11" width="1" height="1" fill="#000"/><rect x="4" y="11" width="1" height="1" fill="#fff"/><rect x="5" y="11" width="1" height="1" fill="#000"/><rect x="11" y="11" width="1" height="1" fill="#ff0000"/><rect x="12" y="11" width="1" height="1" fill="#800000"/><rect x="13" y="11" width="1" height="1" fill="#ff0000"/><rect x="14" y="11" width="1" height="1" fill="#808000"/><rect x="1" y="12" width="1" height="1" fill="#000"/><rect x="2" y="12" width="4" height="1" fill="#fff"/><rect x="6" y="12" width="1" height="1" fill="#000"/><rect x="11" y="12" width="1" height="1" fill="#ff0000"/><rect x="12" y="12" width="1" height="1" fill="#800000"/><rect x="13" y="12" width="1" height="1" fill="#ff0000"/><rect x="15" y="12" width="1" height="1" fill="#808000"/><rect x="2" y="13" width="3" height="1" fill="#000"/><rect x="5" y="13" width="2" height="1" fill="#fff"/><rect x="7" y="13" width="1" height="1" fill="#000"/><rect x="11" y="13" width="3" height="1" fill="#ff0000"/><rect x="15" y="13" width="1" height="1" fill="#808000"/><rect x="5" y="14" width="1" height="1" fill="#000"/><rect x="6" y="14" width="1" height="1" fill="#fff"/><rect x="7" y="14" width="2" height="1" fill="#000"/><rect x="11" y="14" width="3" height="1" fill="#ff0000"/><rect x="15" y="14" width="1" height="1" fill="#000"/><rect x="6" y="15" width="1" height="1" fill="#000"/><rect x="8" y="15" width="2" height="1" fill="#000"/><rect x="11" y="15" width="3" height="1" fill="#ff0000"/><rect x="15" y="15" width="1" height="1" fill="#000"/></svg>
<svg class="a" style="left:269px;top:31px" width="16" height="15" shape-rendering="crispEdges"><rect x="2" y="0" width="1" height="1" fill="#0000ff"/><rect x="12" y="0" width="1" height="1" fill="#0000ff"/><rect x="0" y="1" width="2" height="1" fill="#0000ff"/><rect x="2" y="1" width="1" height="1" fill="#00ffff"/><rect x="3" y="1" width="1" height="1" fill="#0000ff"/><rect x="5" y="1" width="3" height="1" fill="#0000ff"/><rect x="10" y="1" width="3" height="1" fill="#0000ff"/><rect x="14" y="1" width="1" height="1" fill="#ff00ff"/><rect x="0" y="2" width="1" height="1" fill="#00ff00"/><rect x="1" y="2" width="1" height="1" fill="#0000ff"/><rect x="2" y="2" width="2" height="1" fill="#00ffff"/><rect x="4" y="2" width="1" height="1" fill="#0000ff"/><rect x="5" y="2" width="3" height="1" fill="#00ffff"/><rect x="8" y="2" width="2" height="1" fill="#0000ff"/><rect x="10" y="2" width="3" height="1" fill="#00ffff"/><rect x="13" y="2" width="2" height="1" fill="#ff00ff"/><rect x="0" y="3" width="1" height="1" fill="#00ff00"/><rect x="1" y="3" width="4" height="1" fill="#00ffff"/><rect x="5" y="3" width="1" height="1" fill="#fff"/><rect x="6" y="3" width="5" height="1" fill="#00ffff"/><rect x="11" y="3" width="1" height="1" fill="#fff"/><rect x="12" y="3" width="1" height="1" fill="#00ffff"/><rect x="13" y="3" width="1" height="1" fill="#ff00ff"/><rect x="14" y="3" width="1" height="1" fill="#ff0000"/><rect x="0" y="4" width="1" height="1" fill="#00ff00"/><rect x="1" y="4" width="1" height="1" fill="#00ffff"/><rect x="2" y="4" width="1" height="1" fill="#fff"/><rect x="3" y="4" width="3" height="1" fill="#00ffff"/><rect x="6" y="4" width="1" height="1" fill="#fff"/><rect x="7" y="4" width="6" height="1" fill="#00ffff"/><rect x="13" y="4" width="1" height="1" fill="#ff0000"/><rect x="0" y="5" width="1" height="1" fill="#00ff00"/><rect x="1" y="5" width="1" height="1" fill="#00ffff"/><rect x="2" y="5" width="2" height="1" fill="#fff"/><rect x="4" y="5" width="4" height="1" fill="#00ffff"/><rect x="8" y="5" width="1" height="1" fill="#fff"/><rect x="9" y="5" width="2" height="1" fill="#00ffff"/><rect x="11" y="5" width="2" height="1" fill="#ff0000"/><rect x="13" y="5" width="1" height="1" fill="#ff00ff"/><rect x="1" y="6" width="1" height="1" fill="#00ff00"/><rect x="2" y="6" width="2" height="1" fill="#00ffff"/><rect x="4" y="6" width="1" height="1" fill="#fff"/><rect x="5" y="6" width="1" height="1" fill="#00ffff"/><rect x="6" y="6" width="1" height="1" fill="#fff"/><rect x="7" y="6" width="3" height="1" fill="#00ffff"/><rect x="10" y="6" width="1" height="1" fill="#ff0000"/><rect x="11" y="6" width="1" height="1" fill="#ff00ff"/><rect x="1" y="7" width="1" height="1" fill="#00ff00"/><rect x="2" y="7" width="8" height="1" fill="#00ffff"/><rect x="10" y="7" width="1" height="1" fill="#ff0000"/><rect x="1" y="8" width="1" height="1" fill="#00ff00"/><rect x="2" y="8" width="1" height="1" fill="#00ffff"/><rect x="3" y="8" width="1" height="1" fill="#fff"/><rect x="4" y="8" width="5" height="1" fill="#00ffff"/><rect x="9" y="8" width="2" height="1" fill="#ff0000"/><rect x="1" y="9" width="1" height="1" fill="#00ff00"/><rect x="2" y="9" width="6" height="1" fill="#00ffff"/><rect x="8" y="9" width="1" height="1" fill="#ff0000"/><rect x="11" y="9" width="3" height="1" fill="#800000"/><rect x="1" y="10" width="1" height="1" fill="#00ff00"/><rect x="2" y="10" width="6" height="1" fill="#00ffff"/><rect x="8" y="10" width="1" height="1" fill="#00ff00"/><rect x="12" y="10" width="2" height="1" fill="#800000"/><rect x="2" y="11" width="1" height="1" fill="#00ff00"/><rect x="3" y="11" width="1" height="1" fill="#000"/><rect x="4" y="11" width="1" height="1" fill="#fff"/><rect x="5" y="11" width="1" height="1" fill="#00ffff"/><rect x="6" y="11" width="1" height="1" fill="#0000ff"/><rect x="7" y="11" width="1" height="1" fill="#00ff00"/><rect x="11" y="11" width="1" height="1" fill="#800000"/><rect x="13" y="11" width="1" height="1" fill="#800000"/><rect x="3" y="12" width="3" height="1" fill="#00ff00"/><rect x="10" y="12" width="1" height="1" fill="#800000"/><rect x="9" y="13" width="1" height="1" fill="#800000"/><rect x="8" y="14" width="1" height="1" fill="#800000"/></svg>
<svg class="a" style="left:315px;top:31px" width="16" height="14" shape-rendering="crispEdges"><rect x="0" y="0" width="1" height="1" fill="#0000ff"/><rect x="7" y="0" width="1" height="1" fill="#0000ff"/><rect x="15" y="0" width="1" height="1" fill="#0000ff"/><rect x="1" y="1" width="1" height="1" fill="#0000ff"/><rect x="6" y="1" width="1" height="1" fill="#0000ff"/><rect x="8" y="1" width="1" height="1" fill="#0000ff"/><rect x="10" y="1" width="1" height="1" fill="#0000ff"/><rect x="13" y="1" width="1" height="1" fill="#0000ff"/><rect x="14" y="1" width="2" height="1" fill="#00ffff"/><rect x="0" y="2" width="1" height="1" fill="#008000"/><rect x="1" y="2" width="1" height="1" fill="#00ffff"/><rect x="2" y="2" width="1" height="1" fill="#0000ff"/><rect x="4" y="2" width="1" height="1" fill="#0000ff"/><rect x="5" y="2" width="4" height="1" fill="#00ffff"/><rect x="9" y="2" width="1" height="1" fill="#0000ff"/><rect x="10" y="2" width="1" height="1" fill="#00ffff"/><rect x="11" y="2" width="2" height="1" fill="#0000ff"/><rect x="13" y="2" width="3" height="1" fill="#00ffff"/><rect x="1" y="3" width="1" height="1" fill="#00ff00"/><rect x="2" y="3" width="1" height="1" fill="#00ffff"/><rect x="3" y="3" width="2" height="1" fill="#fff"/><rect x="5" y="3" width="2" height="1" fill="#00ffff"/><rect x="7" y="3" width="1" height="1" fill="#fff"/><rect x="8" y="3" width="4" height="1" fill="#00ffff"/><rect x="12" y="3" width="1" height="1" fill="#fff"/><rect x="13" y="3" width="3" height="1" fill="#00ffff"/><rect x="1" y="4" width="1" height="1" fill="#00ff00"/><rect x="2" y="4" width="1" height="1" fill="#00ffff"/><rect x="3" y="4" width="2" height="1" fill="#fff"/><rect x="5" y="4" width="1" height="1" fill="#00ffff"/><rect x="6" y="4" width="1" height="1" fill="#fff"/><rect x="7" y="4" width="6" height="1" fill="#00ffff"/><rect x="13" y="4" width="1" height="1" fill="#ff0000"/><rect x="14" y="4" width="2" height="1" fill="#00ffff"/><rect x="1" y="5" width="1" height="1" fill="#00ff00"/><rect x="2" y="5" width="2" height="1" fill="#00ffff"/><rect x="4" y="5" width="2" height="1" fill="#fff"/><rect x="6" y="5" width="3" height="1" fill="#00ffff"/><rect x="9" y="5" width="6" height="1" fill="#ff0000"/><rect x="15" y="5" width="1" height="1" fill="#00ffff"/><rect x="1" y="6" width="1" height="1" fill="#008000"/><rect x="2" y="6" width="2" height="1" fill="#00ffff"/><rect x="4" y="6" width="1" height="1" fill="#fff"/><rect x="5" y="6" width="2" height="1" fill="#00ffff"/><rect x="7" y="6" width="1" height="1" fill="#fff"/><rect x="8" y="6" width="1" height="1" fill="#00ffff"/><rect x="9" y="6" width="6" height="1" fill="#ff0000"/><rect x="15" y="6" width="1" height="1" fill="#00ffff"/><rect x="1" y="7" width="1" height="1" fill="#00ff00"/><rect x="2" y="7" width="2" height="1" fill="#00ffff"/><rect x="4" y="7" width="1" height="1" fill="#fff"/><rect x="5" y="7" width="8" height="1" fill="#00ffff"/><rect x="13" y="7" width="1" height="1" fill="#ff0000"/><rect x="14" y="7" width="2" height="1" fill="#00ffff"/><rect x="1" y="8" width="1" height="1" fill="#00ff00"/><rect x="2" y="8" width="2" height="1" fill="#00ffff"/><rect x="4" y="8" width="1" height="1" fill="#fff"/><rect x="5" y="8" width="11" height="1" fill="#00ffff"/><rect x="2" y="9" width="1" height="1" fill="#00ff00"/><rect x="3" y="9" width="6" height="1" fill="#00ffff"/><rect x="9" y="9" width="1" height="1" fill="#ff00ff"/><rect x="10" y="9" width="4" height="1" fill="#800000"/><rect x="14" y="9" width="2" height="1" fill="#ff00ff"/><rect x="2" y="10" width="1" height="1" fill="#00ff00"/><rect x="3" y="10" width="6" height="1" fill="#00ffff"/><rect x="9" y="10" width="1" height="1" fill="#800000"/><rect x="2" y="11" width="1" height="1" fill="#00ff00"/><rect x="3" y="11" width="6" height="1" fill="#00ffff"/><rect x="2" y="12" width="1" height="1" fill="#00ff00"/><rect x="3" y="12" width="5" height="1" fill="#00ffff"/><rect x="8" y="12" width="1" height="1" fill="#ff00ff"/><rect x="2" y="13" width="6" height="1" fill="#008000"/><rect x="8" y="13" width="1" height="1" fill="#ff00ff"/></svg>
<svg class="a" style="left:363px;top:31px" width="16" height="14" shape-rendering="crispEdges"><rect x="0" y="0" width="14" height="1" fill="#0000ff"/><rect x="14" y="0" width="1" height="1" fill="#ff0000"/><rect x="0" y="1" width="10" height="1" fill="#00ffff"/><rect x="10" y="1" width="1" height="1" fill="#fff"/><rect x="11" y="1" width="2" height="1" fill="#00ffff"/><rect x="13" y="1" width="1" height="1" fill="#ff0000"/><rect x="1" y="2" width="1" height="1" fill="#00ffff"/><rect x="2" y="2" width="1" height="1" fill="#fff"/><rect x="3" y="2" width="2" height="1" fill="#00ffff"/><rect x="5" y="2" width="1" height="1" fill="#0000ff"/><rect x="6" y="2" width="6" height="1" fill="#00ffff"/><rect x="12" y="2" width="1" height="1" fill="#000"/><rect x="1" y="3" width="8" height="1" fill="#00ffff"/><rect x="9" y="3" width="1" height="1" fill="#fff"/><rect x="10" y="3" width="1" height="1" fill="#00ffff"/><rect x="11" y="3" width="1" height="1" fill="#00ff00"/><rect x="12" y="3" width="1" height="1" fill="#000"/><rect x="1" y="4" width="9" height="1" fill="#00ffff"/><rect x="10" y="4" width="1" height="1" fill="#00ff00"/><rect x="11" y="4" width="1" height="1" fill="#000"/><rect x="1" y="5" width="1" height="1" fill="#000"/><rect x="2" y="5" width="1" height="1" fill="#00ff00"/><rect x="3" y="5" width="1" height="1" fill="#fff"/><rect x="4" y="5" width="3" height="1" fill="#00ffff"/><rect x="7" y="5" width="1" height="1" fill="#0000ff"/><rect x="8" y="5" width="1" height="1" fill="#00ffff"/><rect x="9" y="5" width="1" height="1" fill="#0000ff"/><rect x="10" y="5" width="1" height="1" fill="#00ff00"/><rect x="11" y="5" width="1" height="1" fill="#000"/><rect x="2" y="6" width="1" height="1" fill="#00ff00"/><rect x="3" y="6" width="2" height="1" fill="#00ffff"/><rect x="5" y="6" width="1" height="1" fill="#0000ff"/><rect x="6" y="6" width="4" height="1" fill="#00ffff"/><rect x="10" y="6" width="1" height="1" fill="#00ff00"/><rect x="2" y="7" width="7" height="1" fill="#00ff00"/><rect x="9" y="7" width="2" height="1" fill="#000"/><rect x="7" y="9" width="2" height="1" fill="#800000"/><rect x="6" y="10" width="1" height="1" fill="#800000"/><rect x="9" y="10" width="1" height="1" fill="#800000"/><rect x="2" y="11" width="1" height="1" fill="#800000"/><rect x="5" y="11" width="1" height="1" fill="#800000"/><rect x="10" y="11" width="1" height="1" fill="#800000"/><rect x="13" y="11" width="1" height="1" fill="#800000"/><rect x="2" y="12" width="3" height="1" fill="#800000"/><rect x="11" y="12" width="3" height="1" fill="#800000"/><rect x="2" y="13" width="4" height="1" fill="#800000"/><rect x="10" y="13" width="4" height="1" fill="#800000"/></svg>
<svg class="a" style="left:409px;top:30px" width="16" height="15" shape-rendering="crispEdges"><rect x="11" y="0" width="4" height="1" fill="#000"/><rect x="11" y="1" width="1" height="1" fill="#000"/><rect x="12" y="1" width="2" height="1" fill="#c0c0c0"/><rect x="14" y="1" width="1" height="1" fill="#000"/><rect x="11" y="2" width="1" height="1" fill="#000"/><rect x="12" y="2" width="1" height="1" fill="#c0c0c0"/><rect x="13" y="2" width="1" height="1" fill="#0000ff"/><rect x="14" y="2" width="1" height="1" fill="#000"/><rect x="6" y="3" width="6" height="1" fill="#000"/><rect x="13" y="3" width="2" height="1" fill="#0000ff"/><rect x="5" y="4" width="1" height="1" fill="#000"/><rect x="6" y="4" width="5" height="1" fill="#ffff00"/><rect x="11" y="4" width="1" height="1" fill="#000"/><rect x="14" y="4" width="2" height="1" fill="#0000ff"/><rect x="4" y="5" width="1" height="1" fill="#000"/><rect x="5" y="5" width="2" height="1" fill="#ffff00"/><rect x="7" y="5" width="2" height="1" fill="#800080"/><rect x="9" y="5" width="2" height="1" fill="#ffff00"/><rect x="11" y="5" width="1" height="1" fill="#000"/><rect x="15" y="5" width="1" height="1" fill="#0000ff"/><rect x="3" y="6" width="1" height="1" fill="#000"/><rect x="4" y="6" width="3" height="1" fill="#ffff00"/><rect x="7" y="6" width="1" height="1" fill="#800080"/><rect x="8" y="6" width="1" height="1" fill="#ffff00"/><rect x="9" y="6" width="1" height="1" fill="#800080"/><rect x="10" y="6" width="1" height="1" fill="#ffff00"/><rect x="11" y="6" width="1" height="1" fill="#000"/><rect x="2" y="7" width="1" height="1" fill="#000"/><rect x="3" y="7" width="6" height="1" fill="#ffff00"/><rect x="9" y="7" width="1" height="1" fill="#800080"/><rect x="10" y="7" width="1" height="1" fill="#ffff00"/><rect x="11" y="7" width="1" height="1" fill="#000"/><rect x="1" y="8" width="1" height="1" fill="#000"/><rect x="2" y="8" width="1" height="1" fill="#ffff00"/><rect x="3" y="8" width="2" height="1" fill="#800080"/><rect x="5" y="8" width="1" height="1" fill="#ffff00"/><rect x="6" y="8" width="1" height="1" fill="#800080"/><rect x="7" y="8" width="1" height="1" fill="#ffff00"/><rect x="8" y="8" width="2" height="1" fill="#800080"/><rect x="10" y="8" width="1" height="1" fill="#000"/><rect x="13" y="8" width="3" height="1" fill="#ff0000"/><rect x="0" y="9" width="1" height="1" fill="#000"/><rect x="1" y="9" width="1" height="1" fill="#ffff00"/><rect x="2" y="9" width="1" height="1" fill="#800080"/><rect x="3" y="9" width="1" height="1" fill="#ffff00"/><rect x="4" y="9" width="1" height="1" fill="#800080"/><rect x="5" y="9" width="1" height="1" fill="#ffff00"/><rect x="6" y="9" width="1" height="1" fill="#800080"/><rect x="7" y="9" width="2" height="1" fill="#ffff00"/><rect x="9" y="9" width="1" height="1" fill="#000"/><rect x="14" y="9" width="2" height="1" fill="#ff0000"/><rect x="0" y="10" width="1" height="1" fill="#000"/><rect x="1" y="10" width="3" height="1" fill="#ffff00"/><rect x="4" y="10" width="1" height="1" fill="#800080"/><rect x="5" y="10" width="3" height="1" fill="#ffff00"/><rect x="8" y="10" width="1" height="1" fill="#000"/><rect x="13" y="10" width="1" height="1" fill="#ff0000"/><rect x="15" y="10" width="1" height="1" fill="#ff0000"/><rect x="1" y="11" width="1" height="1" fill="#000"/><rect x="2" y="11" width="3" height="1" fill="#ffff00"/><rect x="5" y="11" width="1" height="1" fill="#800080"/><rect x="6" y="11" width="2" height="1" fill="#ffff00"/><rect x="8" y="11" width="1" height="1" fill="#000"/><rect x="12" y="11" width="1" height="1" fill="#ff0000"/><rect x="2" y="12" width="1" height="1" fill="#000"/><rect x="3" y="12" width="4" height="1" fill="#ffff00"/><rect x="7" y="12" width="1" height="1" fill="#000"/><rect x="11" y="12" width="1" height="1" fill="#ff0000"/><rect x="3" y="13" width="1" height="1" fill="#000"/><rect x="4" y="13" width="2" height="1" fill="#ffff00"/><rect x="6" y="13" width="1" height="1" fill="#000"/><rect x="10" y="13" width="1" height="1" fill="#ff0000"/><rect x="5" y="14" width="1" height="1" fill="#000"/><rect x="9" y="14" width="1" height="1" fill="#ff0000"/></svg>
<svg class="a" style="left:467px;top:30px" width="13" height="16" shape-rendering="crispEdges"><rect x="4" y="0" width="5" height="1" fill="#00ffff"/><rect x="2" y="1" width="2" height="1" fill="#00ffff"/><rect x="4" y="1" width="6" height="1" fill="#008080"/><rect x="0" y="2" width="2" height="1" fill="#00ffff"/><rect x="2" y="2" width="9" height="1" fill="#008080"/><rect x="0" y="3" width="1" height="1" fill="#00ffff"/><rect x="1" y="3" width="2" height="1" fill="#008080"/><rect x="3" y="3" width="3" height="1" fill="#000080"/><rect x="6" y="3" width="4" height="1" fill="#008080"/><rect x="10" y="3" width="1" height="1" fill="#000080"/><rect x="0" y="4" width="2" height="1" fill="#008080"/><rect x="2" y="4" width="1" height="1" fill="#000080"/><rect x="6" y="4" width="1" height="1" fill="#00ffff"/><rect x="7" y="4" width="3" height="1" fill="#008080"/><rect x="10" y="4" width="1" height="1" fill="#000080"/><rect x="1" y="5" width="2" height="1" fill="#000080"/><rect x="6" y="5" width="1" height="1" fill="#00ffff"/><rect x="7" y="5" width="2" height="1" fill="#008080"/><rect x="9" y="5" width="2" height="1" fill="#000080"/><rect x="5" y="6" width="1" height="1" fill="#00ffff"/><rect x="6" y="6" width="3" height="1" fill="#008080"/><rect x="9" y="6" width="1" height="1" fill="#000080"/><rect x="4" y="7" width="1" height="1" fill="#00ffff"/><rect x="5" y="7" width="3" height="1" fill="#008080"/><rect x="8" y="7" width="1" height="1" fill="#000080"/><rect x="3" y="8" width="1" height="1" fill="#00ffff"/><rect x="4" y="8" width="3" height="1" fill="#008080"/><rect x="7" y="8" width="1" height="1" fill="#000080"/><rect x="3" y="9" width="1" height="1" fill="#00ffff"/><rect x="4" y="9" width="2" height="1" fill="#008080"/><rect x="6" y="9" width="1" height="1" fill="#000080"/><rect x="4" y="10" width="2" height="1" fill="#000080"/><rect x="3" y="12" width="1" height="1" fill="#00ffff"/><rect x="4" y="12" width="2" height="1" fill="#008080"/><rect x="3" y="13" width="1" height="1" fill="#00ffff"/><rect x="4" y="13" width="1" height="1" fill="#000080"/><rect x="5" y="13" width="2" height="1" fill="#008080"/><rect x="4" y="14" width="2" height="1" fill="#000080"/><rect x="6" y="14" width="1" height="1" fill="#008080"/><rect x="4" y="15" width="2" height="1" fill="#008080"/></svg>
<svg class="a" style="left:511px;top:30px" width="16" height="16" shape-rendering="crispEdges"><rect x="5" y="0" width="6" height="1" fill="#000"/><rect x="5" y="1" width="1" height="1" fill="#000"/><rect x="6" y="1" width="4" height="1" fill="#00ff00"/><rect x="10" y="1" width="1" height="1" fill="#000"/><rect x="5" y="2" width="6" height="1" fill="#000"/><rect x="3" y="4" width="10" height="1" fill="#000080"/><rect x="3" y="5" width="1" height="1" fill="#000080"/><rect x="4" y="5" width="1" height="1" fill="#ff00ff"/><rect x="5" y="5" width="1" height="1" fill="#000"/><rect x="6" y="5" width="1" height="1" fill="#ff00ff"/><rect x="7" y="5" width="1" height="1" fill="#000"/><rect x="8" y="5" width="1" height="1" fill="#00ffff"/><rect x="9" y="5" width="1" height="1" fill="#fff"/><rect x="10" y="5" width="1" height="1" fill="#00ffff"/><rect x="11" y="5" width="1" height="1" fill="#fff"/><rect x="12" y="5" width="1" height="1" fill="#000080"/><rect x="3" y="6" width="1" height="1" fill="#000080"/><rect x="4" y="6" width="3" height="1" fill="#ff00ff"/><rect x="7" y="6" width="1" height="1" fill="#000"/><rect x="8" y="6" width="1" height="1" fill="#fff"/><rect x="9" y="6" width="1" height="1" fill="#00ffff"/><rect x="10" y="6" width="1" height="1" fill="#fff"/><rect x="11" y="6" width="1" height="1" fill="#00ffff"/><rect x="12" y="6" width="1" height="1" fill="#000080"/><rect x="3" y="7" width="1" height="1" fill="#000080"/><rect x="4" y="7" width="1" height="1" fill="#ff00ff"/><rect x="5" y="7" width="1" height="1" fill="#000"/><rect x="6" y="7" width="1" height="1" fill="#ff00ff"/><rect x="7" y="7" width="1" height="1" fill="#000"/><rect x="8" y="7" width="1" height="1" fill="#00ffff"/><rect x="9" y="7" width="1" height="1" fill="#fff"/><rect x="10" y="7" width="1" height="1" fill="#00ffff"/><rect x="11" y="7" width="1" height="1" fill="#fff"/><rect x="12" y="7" width="1" height="1" fill="#000080"/><rect x="3" y="8" width="1" height="1" fill="#000080"/><rect x="4" y="8" width="3" height="1" fill="#ff00ff"/><rect x="7" y="8" width="1" height="1" fill="#000"/><rect x="8" y="8" width="1" height="1" fill="#fff"/><rect x="9" y="8" width="1" height="1" fill="#00ffff"/><rect x="10" y="8" width="1" height="1" fill="#fff"/><rect x="11" y="8" width="1" height="1" fill="#00ffff"/><rect x="12" y="8" width="1" height="1" fill="#000080"/><rect x="3" y="9" width="1" height="1" fill="#000080"/><rect x="4" y="9" width="1" height="1" fill="#ff00ff"/><rect x="5" y="9" width="1" height="1" fill="#000"/><rect x="6" y="9" width="1" height="1" fill="#ff00ff"/><rect x="7" y="9" width="1" height="1" fill="#000"/><rect x="8" y="9" width="1" height="1" fill="#00ffff"/><rect x="9" y="9" width="1" height="1" fill="#fff"/><rect x="10" y="9" width="1" height="1" fill="#00ffff"/><rect x="11" y="9" width="1" height="1" fill="#fff"/><rect x="12" y="9" width="1" height="1" fill="#000080"/><rect x="3" y="10" width="1" height="1" fill="#000080"/><rect x="4" y="10" width="3" height="1" fill="#ff00ff"/><rect x="7" y="10" width="1" height="1" fill="#000"/><rect x="8" y="10" width="1" height="1" fill="#fff"/><rect x="9" y="10" width="1" height="1" fill="#00ffff"/><rect x="10" y="10" width="2" height="1" fill="#fff"/><rect x="12" y="10" width="1" height="1" fill="#000080"/><rect x="3" y="11" width="1" height="1" fill="#000080"/><rect x="4" y="11" width="1" height="1" fill="#ff00ff"/><rect x="5" y="11" width="1" height="1" fill="#000"/><rect x="6" y="11" width="1" height="1" fill="#ff00ff"/><rect x="7" y="11" width="1" height="1" fill="#000"/><rect x="8" y="11" width="1" height="1" fill="#00ffff"/><rect x="9" y="11" width="1" height="1" fill="#fff"/><rect x="10" y="11" width="1" height="1" fill="#00ffff"/><rect x="11" y="11" width="1" height="1" fill="#fff"/><rect x="12" y="11" width="1" height="1" fill="#000080"/><rect x="3" y="12" width="1" height="1" fill="#000080"/><rect x="4" y="12" width="3" height="1" fill="#ff00ff"/><rect x="7" y="12" width="1" height="1" fill="#000"/><rect x="8" y="12" width="4" height="1" fill="#fff"/><rect x="12" y="12" width="1" height="1" fill="#000080"/><rect x="3" y="13" width="1" height="1" fill="#000080"/><rect x="4" y="13" width="1" height="1" fill="#ff00ff"/><rect x="5" y="13" width="1" height="1" fill="#000"/><rect x="6" y="13" width="1" height="1" fill="#ff00ff"/><rect x="7" y="13" width="1" height="1" fill="#000"/><rect x="8" y="13" width="4" height="1" fill="#fff"/><rect x="12" y="13" width="1" height="1" fill="#000080"/><rect x="0" y="14" width="4" height="1" fill="#000080"/><rect x="4" y="14" width="3" height="1" fill="#000"/><rect x="7" y="14" width="2" height="1" fill="#808080"/><rect x="9" y="14" width="3" height="1" fill="#fff"/><rect x="12" y="14" width="4" height="1" fill="#000080"/><rect x="2" y="15" width="9" height="1" fill="#808080"/></svg>
<svg class="a" style="left:452px;top:95px" width="16" height="16" shape-rendering="crispEdges"><rect x="3" y="0" width="2" height="1" fill="#0000ff"/><rect x="10" y="0" width="5" height="1" fill="#00ffff"/><rect x="2" y="1" width="1" height="1" fill="#0000ff"/><rect x="3" y="1" width="2" height="1" fill="#000080"/><rect x="5" y="1" width="1" height="1" fill="#0000ff"/><rect x="9" y="1" width="1" height="1" fill="#800000"/><rect x="10" y="1" width="4" height="1" fill="#00ffff"/><rect x="14" y="1" width="2" height="1" fill="#800000"/><rect x="2" y="2" width="1" height="1" fill="#0000ff"/><rect x="3" y="2" width="1" height="1" fill="#000080"/><rect x="4" y="2" width="2" height="1" fill="#0000ff"/><rect x="9" y="2" width="1" height="1" fill="#800000"/><rect x="10" y="2" width="2" height="1" fill="#00ffff"/><rect x="12" y="2" width="2" height="1" fill="#800000"/><rect x="2" y="3" width="1" height="1" fill="#0000ff"/><rect x="5" y="3" width="1" height="1" fill="#0000ff"/><rect x="8" y="3" width="3" height="1" fill="#800000"/><rect x="1" y="4" width="2" height="1" fill="#0000ff"/><rect x="5" y="4" width="2" height="1" fill="#0000ff"/><rect x="8" y="4" width="2" height="1" fill="#800000"/><rect x="1" y="5" width="1" height="1" fill="#0000ff"/><rect x="2" y="5" width="1" height="1" fill="#000080"/><rect x="3" y="5" width="4" height="1" fill="#0000ff"/><rect x="1" y="6" width="2" height="1" fill="#0000ff"/><rect x="5" y="6" width="2" height="1" fill="#0000ff"/><rect x="9" y="6" width="6" height="1" fill="#0000ff"/><rect x="0" y="7" width="3" height="1" fill="#0000ff"/><rect x="5" y="7" width="3" height="1" fill="#0000ff"/><rect x="9" y="7" width="1" height="1" fill="#0000ff"/><rect x="10" y="7" width="1" height="1" fill="#fff"/><rect x="14" y="7" width="2" height="1" fill="#0000ff"/><rect x="9" y="8" width="2" height="1" fill="#0000ff"/><rect x="14" y="8" width="2" height="1" fill="#0000ff"/><rect x="9" y="9" width="6" height="1" fill="#0000ff"/><rect x="6" y="10" width="2" height="1" fill="#800000"/><rect x="9" y="10" width="7" height="1" fill="#0000ff"/><rect x="4" y="11" width="2" height="1" fill="#800000"/><rect x="6" y="11" width="1" height="1" fill="#00ffff"/><rect x="7" y="11" width="1" height="1" fill="#800000"/><rect x="9" y="11" width="1" height="1" fill="#0000ff"/><rect x="10" y="11" width="1" height="1" fill="#fff"/><rect x="14" y="11" width="2" height="1" fill="#0000ff"/><rect x="2" y="12" width="2" height="1" fill="#800000"/><rect x="4" y="12" width="3" height="1" fill="#00ffff"/><rect x="7" y="12" width="1" height="1" fill="#800000"/><rect x="9" y="12" width="2" height="1" fill="#0000ff"/><rect x="14" y="12" width="2" height="1" fill="#0000ff"/><rect x="0" y="13" width="2" height="1" fill="#800000"/><rect x="2" y="13" width="5" height="1" fill="#00ffff"/><rect x="7" y="13" width="1" height="1" fill="#800000"/><rect x="9" y="13" width="2" height="1" fill="#0000ff"/><rect x="14" y="13" width="2" height="1" fill="#0000ff"/><rect x="0" y="14" width="6" height="1" fill="#00ffff"/><rect x="6" y="14" width="1" height="1" fill="#800000"/><rect x="9" y="14" width="7" height="1" fill="#0000ff"/><rect x="1" y="15" width="4" height="1" fill="#00ffff"/><rect x="5" y="15" width="1" height="1" fill="#800000"/><rect x="10" y="15" width="5" height="1" fill="#0000ff"/></svg>
<svg class="a" style="left:476px;top:95px" width="15" height="15" shape-rendering="crispEdges"><rect x="5" y="0" width="5" height="1" fill="#000"/><rect x="4" y="1" width="1" height="1" fill="#000"/><rect x="5" y="1" width="5" height="1" fill="#ff0000"/><rect x="10" y="1" width="1" height="1" fill="#000"/><rect x="3" y="2" width="1" height="1" fill="#000"/><rect x="4" y="2" width="7" height="1" fill="#ff0000"/><rect x="11" y="2" width="1" height="1" fill="#000"/><rect x="2" y="3" width="1" height="1" fill="#000"/><rect x="3" y="3" width="9" height="1" fill="#ff0000"/><rect x="12" y="3" width="1" height="1" fill="#000"/><rect x="1" y="4" width="1" height="1" fill="#000"/><rect x="2" y="4" width="11" height="1" fill="#ff0000"/><rect x="13" y="4" width="1" height="1" fill="#000"/><rect x="0" y="5" width="1" height="1" fill="#000"/><rect x="1" y="5" width="1" height="1" fill="#ff0000"/><rect x="2" y="5" width="2" height="1" fill="#ffff00"/><rect x="4" y="5" width="3" height="1" fill="#ff0000"/><rect x="7" y="5" width="1" height="1" fill="#ffff00"/><rect x="8" y="5" width="3" height="1" fill="#ff0000"/><rect x="11" y="5" width="2" height="1" fill="#ffff00"/><rect x="13" y="5" width="1" height="1" fill="#ff0000"/><rect x="14" y="5" width="1" height="1" fill="#000"/><rect x="0" y="6" width="1" height="1" fill="#000"/><rect x="1" y="6" width="1" height="1" fill="#ff0000"/><rect x="2" y="6" width="2" height="1" fill="#ffff00"/><rect x="4" y="6" width="2" height="1" fill="#ff0000"/><rect x="6" y="6" width="3" height="1" fill="#ffff00"/><rect x="9" y="6" width="2" height="1" fill="#ff0000"/><rect x="11" y="6" width="2" height="1" fill="#ffff00"/><rect x="13" y="6" width="1" height="1" fill="#ff0000"/><rect x="14" y="6" width="1" height="1" fill="#000"/><rect x="0" y="7" width="1" height="1" fill="#000"/><rect x="1" y="7" width="2" height="1" fill="#ff0000"/><rect x="3" y="7" width="2" height="1" fill="#ffff00"/><rect x="5" y="7" width="1" height="1" fill="#ff0000"/><rect x="6" y="7" width="3" height="1" fill="#ffff00"/><rect x="9" y="7" width="1" height="1" fill="#ff0000"/><rect x="10" y="7" width="2" height="1" fill="#ffff00"/><rect x="12" y="7" width="2" height="1" fill="#ff0000"/><rect x="14" y="7" width="1" height="1" fill="#000"/><rect x="0" y="8" width="1" height="1" fill="#000"/><rect x="1" y="8" width="2" height="1" fill="#ff0000"/><rect x="3" y="8" width="2" height="1" fill="#ffff00"/><rect x="5" y="8" width="1" height="1" fill="#ff0000"/><rect x="6" y="8" width="3" height="1" fill="#ffff00"/><rect x="9" y="8" width="1" height="1" fill="#ff0000"/><rect x="10" y="8" width="2" height="1" fill="#ffff00"/><rect x="12" y="8" width="2" height="1" fill="#ff0000"/><rect x="14" y="8" width="1" height="1" fill="#000"/><rect x="0" y="9" width="1" height="1" fill="#000"/><rect x="1" y="9" width="3" height="1" fill="#ff0000"/><rect x="4" y="9" width="3" height="1" fill="#ffff00"/><rect x="7" y="9" width="1" height="1" fill="#ff0000"/><rect x="8" y="9" width="3" height="1" fill="#ffff00"/><rect x="11" y="9" width="3" height="1" fill="#ff0000"/><rect x="14" y="9" width="1" height="1" fill="#000"/><rect x="1" y="10" width="1" height="1" fill="#000"/><rect x="2" y="10" width="2" height="1" fill="#ff0000"/><rect x="4" y="10" width="3" height="1" fill="#ffff00"/><rect x="7" y="10" width="1" height="1" fill="#ff0000"/><rect x="8" y="10" width="3" height="1" fill="#ffff00"/><rect x="11" y="10" width="2" height="1" fill="#ff0000"/><rect x="13" y="10" width="1" height="1" fill="#000"/><rect x="2" y="11" width="1" height="1" fill="#000"/><rect x="3" y="11" width="9" height="1" fill="#ff0000"/><rect x="12" y="11" width="1" height="1" fill="#000"/><rect x="3" y="12" width="1" height="1" fill="#000"/><rect x="4" y="12" width="7" height="1" fill="#ff0000"/><rect x="11" y="12" width="1" height="1" fill="#000"/><rect x="4" y="13" width="1" height="1" fill="#000"/><rect x="5" y="13" width="5" height="1" fill="#ff0000"/><rect x="10" y="13" width="1" height="1" fill="#000"/><rect x="5" y="14" width="5" height="1" fill="#000"/></svg>
<svg class="a" style="left:500px;top:97px" width="16" height="13" shape-rendering="crispEdges"><rect x="0" y="0" width="16" height="1" fill="#000"/><rect x="0" y="1" width="1" height="1" fill="#000"/><rect x="1" y="1" width="2" height="1" fill="#c0c0c0"/><rect x="3" y="1" width="10" height="1" fill="#0000ff"/><rect x="13" y="1" width="2" height="1" fill="#c0c0c0"/><rect x="15" y="1" width="1" height="1" fill="#000"/><rect x="0" y="2" width="1" height="1" fill="#000"/><rect x="1" y="2" width="14" height="1" fill="#0000ff"/><rect x="15" y="2" width="1" height="1" fill="#000"/><rect x="0" y="3" width="1" height="1" fill="#000"/><rect x="1" y="3" width="14" height="1" fill="#fff"/><rect x="15" y="3" width="1" height="1" fill="#000"/><rect x="0" y="4" width="1" height="1" fill="#000"/><rect x="1" y="4" width="1" height="1" fill="#fff"/><rect x="2" y="4" width="4" height="1" fill="#000"/><rect x="6" y="4" width="3" height="1" fill="#fff"/><rect x="9" y="4" width="1" height="1" fill="#000"/><rect x="10" y="4" width="5" height="1" fill="#fff"/><rect x="15" y="4" width="1" height="1" fill="#000"/><rect x="0" y="5" width="1" height="1" fill="#000"/><rect x="1" y="5" width="1" height="1" fill="#fff"/><rect x="2" y="5" width="4" height="1" fill="#000"/><rect x="6" y="5" width="3" height="1" fill="#fff"/><rect x="9" y="5" width="1" height="1" fill="#000"/><rect x="10" y="5" width="3" height="1" fill="#fff"/><rect x="13" y="5" width="1" height="1" fill="#0000ff"/><rect x="14" y="5" width="1" height="1" fill="#fff"/><rect x="15" y="5" width="1" height="1" fill="#000"/><rect x="0" y="6" width="1" height="1" fill="#000"/><rect x="1" y="6" width="8" height="1" fill="#fff"/><rect x="9" y="6" width="1" height="1" fill="#000"/><rect x="10" y="6" width="1" height="1" fill="#fff"/><rect x="11" y="6" width="1" height="1" fill="#ff0000"/><rect x="12" y="6" width="1" height="1" fill="#fff"/><rect x="13" y="6" width="1" height="1" fill="#0000ff"/><rect x="14" y="6" width="1" height="1" fill="#fff"/><rect x="15" y="6" width="1" height="1" fill="#000"/><rect x="0" y="7" width="1" height="1" fill="#000"/><rect x="1" y="7" width="1" height="1" fill="#fff"/><rect x="2" y="7" width="5" height="1" fill="#00ffff"/><rect x="7" y="7" width="2" height="1" fill="#fff"/><rect x="9" y="7" width="1" height="1" fill="#000"/><rect x="10" y="7" width="1" height="1" fill="#fff"/><rect x="11" y="7" width="1" height="1" fill="#ff0000"/><rect x="12" y="7" width="1" height="1" fill="#fff"/><rect x="13" y="7" width="1" height="1" fill="#0000ff"/><rect x="14" y="7" width="1" height="1" fill="#fff"/><rect x="15" y="7" width="1" height="1" fill="#000"/><rect x="0" y="8" width="1" height="1" fill="#000"/><rect x="1" y="8" width="1" height="1" fill="#fff"/><rect x="2" y="8" width="2" height="1" fill="#000"/><rect x="4" y="8" width="1" height="1" fill="#fff"/><rect x="5" y="8" width="2" height="1" fill="#000"/><rect x="7" y="8" width="2" height="1" fill="#fff"/><rect x="9" y="8" width="5" height="1" fill="#000"/><rect x="14" y="8" width="1" height="1" fill="#fff"/><rect x="15" y="8" width="1" height="1" fill="#000"/><rect x="0" y="9" width="1" height="1" fill="#000"/><rect x="1" y="9" width="14" height="1" fill="#fff"/><rect x="15" y="9" width="1" height="1" fill="#000"/><rect x="0" y="10" width="1" height="1" fill="#000"/><rect x="1" y="10" width="1" height="1" fill="#fff"/><rect x="2" y="10" width="2" height="1" fill="#000"/><rect x="4" y="10" width="1" height="1" fill="#fff"/><rect x="5" y="10" width="2" height="1" fill="#000"/><rect x="7" y="10" width="1" height="1" fill="#fff"/><rect x="8" y="10" width="3" height="1" fill="#000"/><rect x="11" y="10" width="1" height="1" fill="#fff"/><rect x="12" y="10" width="2" height="1" fill="#000"/><rect x="14" y="10" width="1" height="1" fill="#fff"/><rect x="15" y="10" width="1" height="1" fill="#000"/><rect x="0" y="11" width="1" height="1" fill="#000"/><rect x="1" y="11" width="14" height="1" fill="#fff"/><rect x="15" y="11" width="1" height="1" fill="#000"/><rect x="0" y="12" width="16" height="1" fill="#000"/></svg>
<svg class="a" style="left:523px;top:94px" width="18" height="17" shape-rendering="crispEdges"><rect x="12" y="1" width="1" height="1" fill="#000"/><rect x="10" y="2" width="3" height="1" fill="#000"/><rect x="10" y="3" width="2" height="1" fill="#000"/><rect x="5" y="4" width="2" height="1" fill="#ffff00"/><rect x="7" y="4" width="2" height="1" fill="#ff00ff"/><rect x="10" y="4" width="1" height="1" fill="#000"/><rect x="13" y="4" width="2" height="1" fill="#ffff00"/><rect x="3" y="5" width="5" height="1" fill="#ffff00"/><rect x="8" y="5" width="1" height="1" fill="#ff00ff"/><rect x="10" y="5" width="1" height="1" fill="#000"/><rect x="13" y="5" width="3" height="1" fill="#ffff00"/><rect x="16" y="5" width="1" height="1" fill="#808000"/><rect x="2" y="6" width="1" height="1" fill="#808000"/><rect x="3" y="6" width="4" height="1" fill="#00ffff"/><rect x="7" y="6" width="2" height="1" fill="#ffff00"/><rect x="9" y="6" width="1" height="1" fill="#ff00ff"/><rect x="10" y="6" width="2" height="1" fill="#00ffff"/><rect x="13" y="6" width="2" height="1" fill="#ffff00"/><rect x="15" y="6" width="2" height="1" fill="#00ff00"/><rect x="17" y="6" width="1" height="1" fill="#ffff00"/><rect x="2" y="7" width="6" height="1" fill="#00ffff"/><rect x="9" y="7" width="3" height="1" fill="#00ffff"/><rect x="14" y="7" width="1" height="1" fill="#ffff00"/><rect x="15" y="7" width="3" height="1" fill="#00ff00"/><rect x="3" y="8" width="1" height="1" fill="#ffff00"/><rect x="6" y="8" width="2" height="1" fill="#00ffff"/><rect x="9" y="8" width="1" height="1" fill="#00ffff"/><rect x="10" y="8" width="1" height="1" fill="#0000ff"/><rect x="11" y="8" width="1" height="1" fill="#00ffff"/><rect x="14" y="8" width="4" height="1" fill="#00ff00"/><rect x="3" y="9" width="1" height="1" fill="#808000"/><rect x="5" y="9" width="1" height="1" fill="#800000"/><rect x="6" y="9" width="1" height="1" fill="#0000ff"/><rect x="7" y="9" width="4" height="1" fill="#00ffff"/><rect x="11" y="9" width="1" height="1" fill="#800000"/><rect x="14" y="9" width="1" height="1" fill="#ffff00"/><rect x="15" y="9" width="2" height="1" fill="#00ff00"/><rect x="5" y="10" width="1" height="1" fill="#800000"/><rect x="6" y="10" width="1" height="1" fill="#0000ff"/><rect x="7" y="10" width="3" height="1" fill="#00ffff"/><rect x="10" y="10" width="1" height="1" fill="#0000ff"/><rect x="11" y="10" width="1" height="1" fill="#800000"/><rect x="15" y="10" width="1" height="1" fill="#808000"/><rect x="5" y="11" width="1" height="1" fill="#800000"/><rect x="6" y="11" width="1" height="1" fill="#0000ff"/><rect x="7" y="11" width="2" height="1" fill="#00ffff"/><rect x="9" y="11" width="2" height="1" fill="#ff00ff"/><rect x="11" y="11" width="1" height="1" fill="#800000"/><rect x="5" y="12" width="1" height="1" fill="#800000"/><rect x="6" y="12" width="1" height="1" fill="#ff0000"/><rect x="7" y="12" width="1" height="1" fill="#00ffff"/><rect x="8" y="12" width="3" height="1" fill="#ff00ff"/><rect x="11" y="12" width="1" height="1" fill="#800000"/><rect x="5" y="13" width="1" height="1" fill="#800000"/><rect x="6" y="13" width="1" height="1" fill="#ff0000"/><rect x="7" y="13" width="3" height="1" fill="#ff00ff"/><rect x="10" y="13" width="1" height="1" fill="#800080"/><rect x="11" y="13" width="1" height="1" fill="#800000"/><rect x="5" y="14" width="1" height="1" fill="#800000"/><rect x="6" y="14" width="5" height="1" fill="#0000ff"/><rect x="11" y="14" width="1" height="1" fill="#800000"/><rect x="5" y="15" width="1" height="1" fill="#800000"/><rect x="6" y="15" width="2" height="1" fill="#0000ff"/><rect x="8" y="15" width="1" height="1" fill="#fff"/><rect x="9" y="15" width="1" height="1" fill="#0000ff"/><rect x="10" y="15" width="1" height="1" fill="#ff0000"/><rect x="11" y="15" width="1" height="1" fill="#800000"/><rect x="5" y="16" width="7" height="1" fill="#800000"/></svg>
<svg class="a" style="left:548px;top:95px" width="16" height="16" shape-rendering="crispEdges"><rect x="1" y="0" width="14" height="1" fill="#008000"/><rect x="0" y="1" width="1" height="1" fill="#008000"/><rect x="1" y="1" width="1" height="1" fill="#fff"/><rect x="2" y="1" width="1" height="1" fill="#808080"/><rect x="3" y="1" width="1" height="1" fill="#fff"/><rect x="4" y="1" width="1" height="1" fill="#808080"/><rect x="5" y="1" width="1" height="1" fill="#fff"/><rect x="6" y="1" width="1" height="1" fill="#808080"/><rect x="7" y="1" width="1" height="1" fill="#fff"/><rect x="8" y="1" width="1" height="1" fill="#808080"/><rect x="9" y="1" width="1" height="1" fill="#fff"/><rect x="10" y="1" width="1" height="1" fill="#808080"/><rect x="11" y="1" width="1" height="1" fill="#fff"/><rect x="12" y="1" width="1" height="1" fill="#808080"/><rect x="13" y="1" width="1" height="1" fill="#fff"/><rect x="14" y="1" width="1" height="1" fill="#808080"/><rect x="15" y="1" width="1" height="1" fill="#008000"/><rect x="0" y="2" width="1" height="1" fill="#008000"/><rect x="1" y="2" width="1" height="1" fill="#808080"/><rect x="2" y="2" width="13" height="1" fill="#fff"/><rect x="15" y="2" width="1" height="1" fill="#008000"/><rect x="0" y="3" width="1" height="1" fill="#008000"/><rect x="1" y="3" width="2" height="1" fill="#fff"/><rect x="3" y="3" width="1" height="1" fill="#c0c0c0"/><rect x="4" y="3" width="2" height="1" fill="#808080"/><rect x="6" y="3" width="5" height="1" fill="#fff"/><rect x="11" y="3" width="1" height="1" fill="#008000"/><rect x="12" y="3" width="1" height="1" fill="#fff"/><rect x="13" y="3" width="1" height="1" fill="#008000"/><rect x="14" y="3" width="1" height="1" fill="#808080"/><rect x="15" y="3" width="1" height="1" fill="#008000"/><rect x="0" y="4" width="1" height="1" fill="#008000"/><rect x="1" y="4" width="1" height="1" fill="#808080"/><rect x="2" y="4" width="1" height="1" fill="#fff"/><rect x="3" y="4" width="1" height="1" fill="#808080"/><rect x="4" y="4" width="1" height="1" fill="#c0c0c0"/><rect x="5" y="4" width="2" height="1" fill="#808080"/><rect x="7" y="4" width="3" height="1" fill="#fff"/><rect x="10" y="4" width="1" height="1" fill="#008000"/><rect x="11" y="4" width="1" height="1" fill="#fff"/><rect x="12" y="4" width="1" height="1" fill="#008000"/><rect x="13" y="4" width="2" height="1" fill="#fff"/><rect x="15" y="4" width="1" height="1" fill="#008000"/><rect x="0" y="5" width="1" height="1" fill="#008000"/><rect x="1" y="5" width="2" height="1" fill="#fff"/><rect x="3" y="5" width="2" height="1" fill="#808080"/><rect x="5" y="5" width="1" height="1" fill="#c0c0c0"/><rect x="6" y="5" width="2" height="1" fill="#808080"/><rect x="8" y="5" width="1" height="1" fill="#fff"/><rect x="9" y="5" width="1" height="1" fill="#008000"/><rect x="10" y="5" width="1" height="1" fill="#fff"/><rect x="11" y="5" width="1" height="1" fill="#008000"/><rect x="12" y="5" width="1" height="1" fill="#fff"/><rect x="13" y="5" width="1" height="1" fill="#008000"/><rect x="14" y="5" width="1" height="1" fill="#808080"/><rect x="15" y="5" width="1" height="1" fill="#008000"/><rect x="0" y="6" width="1" height="1" fill="#008000"/><rect x="1" y="6" width="1" height="1" fill="#808080"/><rect x="2" y="6" width="2" height="1" fill="#fff"/><rect x="4" y="6" width="2" height="1" fill="#808080"/><rect x="6" y="6" width="1" height="1" fill="#c0c0c0"/><rect x="7" y="6" width="1" height="1" fill="#808080"/><rect x="8" y="6" width="1" height="1" fill="#008000"/><rect x="9" y="6" width="1" height="1" fill="#fff"/><rect x="10" y="6" width="1" height="1" fill="#008000"/><rect x="11" y="6" width="1" height="1" fill="#fff"/><rect x="12" y="6" width="1" height="1" fill="#008000"/><rect x="13" y="6" width="2" height="1" fill="#fff"/><rect x="15" y="6" width="1" height="1" fill="#008000"/><rect x="0" y="7" width="1" height="1" fill="#008000"/><rect x="1" y="7" width="4" height="1" fill="#fff"/><rect x="5" y="7" width="2" height="1" fill="#808080"/><rect x="7" y="7" width="1" height="1" fill="#008000"/><rect x="8" y="7" width="1" height="1" fill="#808080"/><rect x="9" y="7" width="1" height="1" fill="#008000"/><rect x="10" y="7" width="1" height="1" fill="#fff"/><rect x="11" y="7" width="1" height="1" fill="#008000"/><rect x="12" y="7" width="2" height="1" fill="#fff"/><rect x="14" y="7" width="1" height="1" fill="#808080"/><rect x="15" y="7" width="1" height="1" fill="#008000"/><rect x="0" y="8" width="1" height="1" fill="#008000"/><rect x="1" y="8" width="1" height="1" fill="#808080"/><rect x="2" y="8" width="4" height="1" fill="#fff"/><rect x="6" y="8" width="1" height="1" fill="#008000"/><rect x="7" y="8" width="1" height="1" fill="#808080"/><rect x="8" y="8" width="1" height="1" fill="#008000"/><rect x="9" y="8" width="1" height="1" fill="#808080"/><rect x="10" y="8" width="1" height="1" fill="#008000"/><rect x="11" y="8" width="4" height="1" fill="#fff"/><rect x="15" y="8" width="1" height="1" fill="#008000"/><rect x="0" y="9" width="1" height="1" fill="#008000"/><rect x="1" y="9" width="4" height="1" fill="#fff"/><rect x="5" y="9" width="1" height="1" fill="#008000"/><rect x="6" y="9" width="1" height="1" fill="#fff"/><rect x="7" y="9" width="1" height="1" fill="#008000"/><rect x="8" y="9" width="1" height="1" fill="#808080"/><rect x="9" y="9" width="1" height="1" fill="#008000"/><rect x="10" y="9" width="2" height="1" fill="#808080"/><rect x="12" y="9" width="2" height="1" fill="#fff"/><rect x="14" y="9" width="1" height="1" fill="#808080"/><rect x="15" y="9" width="1" height="1" fill="#008000"/><rect x="0" y="10" width="1" height="1" fill="#008000"/><rect x="1" y="10" width="1" height="1" fill="#808080"/><rect x="2" y="10" width="2" height="1" fill="#fff"/><rect x="4" y="10" width="1" height="1" fill="#008000"/><rect x="5" y="10" width="1" height="1" fill="#fff"/><rect x="6" y="10" width="1" height="1" fill="#008000"/><rect x="7" y="10" width="1" height="1" fill="#fff"/><rect x="8" y="10" width="1" height="1" fill="#008000"/><rect x="9" y="10" width="1" height="1" fill="#808080"/><rect x="10" y="10" width="1" height="1" fill="#c0c0c0"/><rect x="11" y="10" width="2" height="1" fill="#808080"/><rect x="13" y="10" width="2" height="1" fill="#fff"/><rect x="15" y="10" width="1" height="1" fill="#008000"/><rect x="0" y="11" width="1" height="1" fill="#008000"/><rect x="1" y="11" width="2" height="1" fill="#fff"/><rect x="3" y="11" width="1" height="1" fill="#008000"/><rect x="4" y="11" width="1" height="1" fill="#fff"/><rect x="5" y="11" width="1" height="1" fill="#008000"/><rect x="6" y="11" width="1" height="1" fill="#fff"/><rect x="7" y="11" width="1" height="1" fill="#008000"/><rect x="8" y="11" width="1" height="1" fill="#fff"/><rect x="9" y="11" width="2" height="1" fill="#808080"/><rect x="11" y="11" width="1" height="1" fill="#c0c0c0"/><rect x="12" y="11" width="3" height="1" fill="#808080"/><rect x="15" y="11" width="1" height="1" fill="#008000"/><rect x="0" y="12" width="1" height="1" fill="#008000"/><rect x="1" y="12" width="1" height="1" fill="#808080"/><rect x="2" y="12" width="2" height="1" fill="#fff"/><rect x="4" y="12" width="1" height="1" fill="#008000"/><rect x="5" y="12" width="1" height="1" fill="#fff"/><rect x="6" y="12" width="1" height="1" fill="#008000"/><rect x="7" y="12" width="3" height="1" fill="#fff"/><rect x="10" y="12" width="2" height="1" fill="#808080"/><rect x="12" y="12" width="1" height="1" fill="#c0c0c0"/><rect x="13" y="12" width="1" height="1" fill="#808080"/><rect x="14" y="12" width="1" height="1" fill="#fff"/><rect x="15" y="12" width="1" height="1" fill="#008000"/><rect x="0" y="13" width="1" height="1" fill="#008000"/><rect x="1" y="13" width="2" height="1" fill="#fff"/><rect x="3" y="13" width="1" height="1" fill="#008000"/><rect x="4" y="13" width="1" height="1" fill="#fff"/><rect x="5" y="13" width="1" height="1" fill="#008000"/><rect x="6" y="13" width="5" height="1" fill="#fff"/><rect x="11" y="13" width="2" height="1" fill="#808080"/><rect x="13" y="13" width="1" height="1" fill="#c0c0c0"/><rect x="14" y="13" width="1" height="1" fill="#808080"/><rect x="15" y="13" width="1" height="1" fill="#008000"/><rect x="0" y="14" width="1" height="1" fill="#008000"/><rect x="1" y="14" width="1" height="1" fill="#808080"/><rect x="2" y="14" width="1" height="1" fill="#fff"/><rect x="3" y="14" width="1" height="1" fill="#808080"/><rect x="4" y="14" width="1" height="1" fill="#fff"/><rect x="5" y="14" width="1" height="1" fill="#808080"/><rect x="6" y="14" width="1" height="1" fill="#fff"/><rect x="7" y="14" width="1" height="1" fill="#808080"/><rect x="8" y="14" width="1" height="1" fill="#fff"/><rect x="9" y="14" width="1" height="1" fill="#808080"/><rect x="10" y="14" width="1" height="1" fill="#fff"/><rect x="11" y="14" width="1" height="1" fill="#808080"/><rect x="12" y="14" width="1" height="1" fill="#fff"/><rect x="13" y="14" width="1" height="1" fill="#808080"/><rect x="14" y="14" width="1" height="1" fill="#fff"/><rect x="15" y="14" width="1" height="1" fill="#008000"/><rect x="1" y="15" width="14" height="1" fill="#008000"/></svg>
<svg class="a" style="left:573px;top:96px" width="15" height="14" shape-rendering="crispEdges"><rect x="0" y="0" width="1" height="1" fill="#000"/><rect x="4" y="0" width="1" height="1" fill="#000"/><rect x="6" y="0" width="3" height="1" fill="#000"/><rect x="11" y="0" width="3" height="1" fill="#000"/><rect x="0" y="1" width="2" height="1" fill="#000"/><rect x="3" y="1" width="2" height="1" fill="#000"/><rect x="6" y="1" width="1" height="1" fill="#000"/><rect x="9" y="1" width="1" height="1" fill="#000"/><rect x="11" y="1" width="1" height="1" fill="#000"/><rect x="14" y="1" width="1" height="1" fill="#000"/><rect x="0" y="2" width="1" height="1" fill="#000"/><rect x="2" y="2" width="1" height="1" fill="#000"/><rect x="4" y="2" width="1" height="1" fill="#000"/><rect x="6" y="2" width="1" height="1" fill="#000"/><rect x="9" y="2" width="1" height="1" fill="#000"/><rect x="11" y="2" width="1" height="1" fill="#000"/><rect x="14" y="2" width="1" height="1" fill="#000"/><rect x="0" y="3" width="1" height="1" fill="#000"/><rect x="4" y="3" width="1" height="1" fill="#000"/><rect x="6" y="3" width="1" height="1" fill="#000"/><rect x="9" y="3" width="1" height="1" fill="#000"/><rect x="11" y="3" width="1" height="1" fill="#000"/><rect x="14" y="3" width="1" height="1" fill="#000"/><rect x="0" y="4" width="1" height="1" fill="#000"/><rect x="4" y="4" width="1" height="1" fill="#000"/><rect x="6" y="4" width="1" height="1" fill="#000"/><rect x="9" y="4" width="1" height="1" fill="#000"/><rect x="11" y="4" width="1" height="1" fill="#000"/><rect x="14" y="4" width="1" height="1" fill="#000"/><rect x="0" y="5" width="1" height="1" fill="#000"/><rect x="4" y="5" width="1" height="1" fill="#000"/><rect x="7" y="5" width="2" height="1" fill="#000"/><rect x="11" y="5" width="3" height="1" fill="#000"/><rect x="2" y="7" width="1" height="1" fill="#000"/><rect x="5" y="7" width="3" height="1" fill="#000"/><rect x="12" y="7" width="2" height="1" fill="#000"/><rect x="1" y="8" width="2" height="1" fill="#000"/><rect x="8" y="8" width="1" height="1" fill="#000"/><rect x="11" y="8" width="1" height="1" fill="#000"/><rect x="14" y="8" width="1" height="1" fill="#000"/><rect x="2" y="9" width="1" height="1" fill="#000"/><rect x="5" y="9" width="3" height="1" fill="#000"/><rect x="11" y="9" width="1" height="1" fill="#000"/><rect x="14" y="9" width="1" height="1" fill="#000"/><rect x="2" y="10" width="1" height="1" fill="#000"/><rect x="8" y="10" width="1" height="1" fill="#000"/><rect x="11" y="10" width="1" height="1" fill="#000"/><rect x="14" y="10" width="1" height="1" fill="#000"/><rect x="2" y="11" width="1" height="1" fill="#000"/><rect x="8" y="11" width="1" height="1" fill="#000"/><rect x="11" y="11" width="1" height="1" fill="#000"/><rect x="14" y="11" width="1" height="1" fill="#000"/><rect x="2" y="12" width="1" height="1" fill="#000"/><rect x="8" y="12" width="1" height="1" fill="#000"/><rect x="11" y="12" width="1" height="1" fill="#000"/><rect x="14" y="12" width="1" height="1" fill="#000"/><rect x="1" y="13" width="3" height="1" fill="#000"/><rect x="5" y="13" width="3" height="1" fill="#000"/><rect x="12" y="13" width="2" height="1" fill="#000"/></svg>
<svg class="a" style="left:597px;top:95px" width="14" height="16" shape-rendering="crispEdges"><rect x="7" y="0" width="1" height="1" fill="#808080"/><rect x="8" y="0" width="1" height="1" fill="#c0c0c0"/><rect x="9" y="0" width="1" height="1" fill="#808080"/><rect x="5" y="1" width="1" height="1" fill="#808080"/><rect x="6" y="1" width="1" height="1" fill="#c0c0c0"/><rect x="7" y="1" width="2" height="1" fill="#fff"/><rect x="9" y="1" width="2" height="1" fill="#c0c0c0"/><rect x="11" y="1" width="1" height="1" fill="#808080"/><rect x="4" y="2" width="1" height="1" fill="#c0c0c0"/><rect x="5" y="2" width="2" height="1" fill="#fff"/><rect x="7" y="2" width="1" height="1" fill="#c0c0c0"/><rect x="8" y="2" width="2" height="1" fill="#fff"/><rect x="10" y="2" width="2" height="1" fill="#c0c0c0"/><rect x="12" y="2" width="1" height="1" fill="#808080"/><rect x="4" y="3" width="1" height="1" fill="#c0c0c0"/><rect x="5" y="3" width="6" height="1" fill="#fff"/><rect x="11" y="3" width="1" height="1" fill="#c0c0c0"/><rect x="12" y="3" width="1" height="1" fill="#808080"/><rect x="13" y="3" width="1" height="1" fill="#000"/><rect x="4" y="4" width="7" height="1" fill="#c0c0c0"/><rect x="11" y="4" width="2" height="1" fill="#808080"/><rect x="13" y="4" width="1" height="1" fill="#000"/><rect x="4" y="5" width="7" height="1" fill="#c0c0c0"/><rect x="11" y="5" width="2" height="1" fill="#808080"/><rect x="13" y="5" width="1" height="1" fill="#000"/><rect x="4" y="6" width="2" height="1" fill="#c0c0c0"/><rect x="6" y="6" width="3" height="1" fill="#ff0000"/><rect x="9" y="6" width="2" height="1" fill="#c0c0c0"/><rect x="11" y="6" width="2" height="1" fill="#808080"/><rect x="13" y="6" width="1" height="1" fill="#000"/><rect x="4" y="7" width="1" height="1" fill="#00ff00"/><rect x="5" y="7" width="5" height="1" fill="#ff0000"/><rect x="10" y="7" width="1" height="1" fill="#000"/><rect x="11" y="7" width="2" height="1" fill="#808080"/><rect x="13" y="7" width="1" height="1" fill="#000"/><rect x="4" y="8" width="2" height="1" fill="#00ff00"/><rect x="6" y="8" width="3" height="1" fill="#ff0000"/><rect x="9" y="8" width="1" height="1" fill="#000"/><rect x="10" y="8" width="1" height="1" fill="#c0c0c0"/><rect x="11" y="8" width="2" height="1" fill="#808080"/><rect x="13" y="8" width="1" height="1" fill="#000"/><rect x="2" y="9" width="4" height="1" fill="#00ff00"/><rect x="6" y="9" width="3" height="1" fill="#000"/><rect x="9" y="9" width="2" height="1" fill="#c0c0c0"/><rect x="11" y="9" width="2" height="1" fill="#808080"/><rect x="13" y="9" width="1" height="1" fill="#000"/><rect x="2" y="10" width="4" height="1" fill="#00ff00"/><rect x="6" y="10" width="5" height="1" fill="#c0c0c0"/><rect x="11" y="10" width="2" height="1" fill="#808080"/><rect x="13" y="10" width="1" height="1" fill="#000"/><rect x="0" y="11" width="6" height="1" fill="#00ff00"/><rect x="6" y="11" width="5" height="1" fill="#c0c0c0"/><rect x="11" y="11" width="2" height="1" fill="#808080"/><rect x="13" y="11" width="1" height="1" fill="#000"/><rect x="0" y="12" width="4" height="1" fill="#00ff00"/><rect x="4" y="12" width="7" height="1" fill="#c0c0c0"/><rect x="11" y="12" width="2" height="1" fill="#808080"/><rect x="13" y="12" width="1" height="1" fill="#000"/><rect x="0" y="13" width="2" height="1" fill="#00ff00"/><rect x="2" y="13" width="2" height="1" fill="#008000"/><rect x="4" y="13" width="2" height="1" fill="#000"/><rect x="6" y="13" width="4" height="1" fill="#c0c0c0"/><rect x="10" y="13" width="1" height="1" fill="#000"/><rect x="11" y="13" width="2" height="1" fill="#808080"/><rect x="13" y="13" width="1" height="1" fill="#000"/><rect x="0" y="14" width="2" height="1" fill="#008000"/><rect x="6" y="14" width="2" height="1" fill="#000"/><rect x="8" y="14" width="2" height="1" fill="#c0c0c0"/><rect x="10" y="14" width="3" height="1" fill="#000"/><rect x="0" y="15" width="2" height="1" fill="#008000"/><rect x="8" y="15" width="2" height="1" fill="#000"/></svg>
<svg class="a" style="left:542px;top:131px" width="14" height="14" shape-rendering="crispEdges"><rect x="0" y="0" width="8" height="1" fill="#000"/><rect x="0" y="1" width="2" height="1" fill="#000"/><rect x="3" y="1" width="2" height="1" fill="#000"/><rect x="6" y="1" width="2" height="1" fill="#000"/><rect x="0" y="2" width="1" height="1" fill="#000"/><rect x="3" y="2" width="2" height="1" fill="#000"/><rect x="7" y="2" width="1" height="1" fill="#000"/><rect x="3" y="3" width="2" height="1" fill="#000"/><rect x="3" y="4" width="2" height="1" fill="#000"/><rect x="3" y="5" width="2" height="1" fill="#000"/><rect x="6" y="5" width="2" height="1" fill="#000"/><rect x="10" y="5" width="2" height="1" fill="#000"/><rect x="3" y="6" width="2" height="1" fill="#000"/><rect x="7" y="6" width="1" height="1" fill="#000"/><rect x="10" y="6" width="1" height="1" fill="#000"/><rect x="3" y="7" width="2" height="1" fill="#000"/><rect x="8" y="7" width="2" height="1" fill="#000"/><rect x="2" y="8" width="4" height="1" fill="#000"/><rect x="8" y="8" width="2" height="1" fill="#000"/><rect x="7" y="9" width="1" height="1" fill="#000"/><rect x="10" y="9" width="1" height="1" fill="#000"/><rect x="6" y="10" width="2" height="1" fill="#000"/><rect x="10" y="10" width="2" height="1" fill="#000"/><rect x="0" y="13" width="14" height="1" fill="#000"/></svg>
<svg class="a" style="left:566px;top:131px" width="14" height="15" shape-rendering="crispEdges"><rect x="1" y="0" width="3" height="1" fill="#000"/><rect x="7" y="0" width="3" height="1" fill="#000"/><rect x="1" y="1" width="1" height="1" fill="#000"/><rect x="4" y="1" width="1" height="1" fill="#000"/><rect x="7" y="1" width="1" height="1" fill="#000"/><rect x="10" y="1" width="1" height="1" fill="#000"/><rect x="1" y="2" width="1" height="1" fill="#000"/><rect x="4" y="2" width="1" height="1" fill="#000"/><rect x="7" y="2" width="1" height="1" fill="#000"/><rect x="10" y="2" width="1" height="1" fill="#000"/><rect x="1" y="3" width="3" height="1" fill="#000"/><rect x="7" y="3" width="3" height="1" fill="#000"/><rect x="1" y="4" width="1" height="1" fill="#000"/><rect x="7" y="4" width="1" height="1" fill="#000"/><rect x="1" y="5" width="1" height="1" fill="#000"/><rect x="7" y="5" width="1" height="1" fill="#000"/><rect x="3" y="7" width="2" height="1" fill="#ff0000"/><rect x="2" y="8" width="2" height="1" fill="#ff0000"/><rect x="10" y="8" width="1" height="1" fill="#00ff00"/><rect x="1" y="9" width="9" height="1" fill="#ff0000"/><rect x="10" y="9" width="2" height="1" fill="#00ff00"/><rect x="0" y="10" width="10" height="1" fill="#ff0000"/><rect x="10" y="10" width="3" height="1" fill="#00ff00"/><rect x="1" y="11" width="2" height="1" fill="#ff0000"/><rect x="3" y="11" width="11" height="1" fill="#00ff00"/><rect x="2" y="12" width="2" height="1" fill="#ff0000"/><rect x="4" y="12" width="6" height="1" fill="#008000"/><rect x="10" y="12" width="3" height="1" fill="#00ff00"/><rect x="3" y="13" width="1" height="1" fill="#ff0000"/><rect x="10" y="13" width="2" height="1" fill="#00ff00"/><rect x="10" y="14" width="1" height="1" fill="#00ff00"/></svg>
<svg class="a" style="left:590px;top:131px" width="14" height="13" shape-rendering="crispEdges"><rect x="0" y="0" width="14" height="1" fill="#000"/><rect x="0" y="1" width="1" height="1" fill="#000"/><rect x="1" y="1" width="1" height="1" fill="#fff"/><rect x="2" y="1" width="10" height="1" fill="#c0c0c0"/><rect x="12" y="1" width="1" height="1" fill="#fff"/><rect x="13" y="1" width="1" height="1" fill="#000"/><rect x="0" y="2" width="14" height="1" fill="#000"/><rect x="0" y="3" width="1" height="1" fill="#000"/><rect x="1" y="3" width="5" height="1" fill="#fff"/><rect x="6" y="3" width="1" height="1" fill="#c0c0c0"/><rect x="7" y="3" width="6" height="1" fill="#fff"/><rect x="13" y="3" width="1" height="1" fill="#000"/><rect x="0" y="4" width="1" height="1" fill="#000"/><rect x="1" y="4" width="1" height="1" fill="#fff"/><rect x="2" y="4" width="3" height="1" fill="#000080"/><rect x="5" y="4" width="1" height="1" fill="#fff"/><rect x="6" y="4" width="1" height="1" fill="#c0c0c0"/><rect x="7" y="4" width="1" height="1" fill="#fff"/><rect x="8" y="4" width="4" height="1" fill="#000080"/><rect x="12" y="4" width="1" height="1" fill="#fff"/><rect x="13" y="4" width="1" height="1" fill="#000"/><rect x="0" y="5" width="1" height="1" fill="#000"/><rect x="1" y="5" width="5" height="1" fill="#fff"/><rect x="6" y="5" width="1" height="1" fill="#c0c0c0"/><rect x="7" y="5" width="6" height="1" fill="#fff"/><rect x="13" y="5" width="1" height="1" fill="#000"/><rect x="0" y="6" width="1" height="1" fill="#000"/><rect x="1" y="6" width="1" height="1" fill="#fff"/><rect x="2" y="6" width="3" height="1" fill="#000080"/><rect x="5" y="6" width="1" height="1" fill="#fff"/><rect x="6" y="6" width="1" height="1" fill="#c0c0c0"/><rect x="7" y="6" width="1" height="1" fill="#fff"/><rect x="8" y="6" width="3" height="1" fill="#000080"/><rect x="11" y="6" width="2" height="1" fill="#fff"/><rect x="13" y="6" width="1" height="1" fill="#000"/><rect x="0" y="7" width="1" height="1" fill="#000"/><rect x="1" y="7" width="5" height="1" fill="#fff"/><rect x="6" y="7" width="1" height="1" fill="#c0c0c0"/><rect x="7" y="7" width="6" height="1" fill="#fff"/><rect x="13" y="7" width="1" height="1" fill="#000"/><rect x="0" y="8" width="1" height="1" fill="#000"/><rect x="1" y="8" width="1" height="1" fill="#fff"/><rect x="2" y="8" width="3" height="1" fill="#000080"/><rect x="5" y="8" width="1" height="1" fill="#fff"/><rect x="6" y="8" width="1" height="1" fill="#c0c0c0"/><rect x="7" y="8" width="1" height="1" fill="#fff"/><rect x="8" y="8" width="4" height="1" fill="#000080"/><rect x="12" y="8" width="1" height="1" fill="#fff"/><rect x="13" y="8" width="1" height="1" fill="#000"/><rect x="0" y="9" width="1" height="1" fill="#000"/><rect x="1" y="9" width="5" height="1" fill="#fff"/><rect x="6" y="9" width="1" height="1" fill="#c0c0c0"/><rect x="7" y="9" width="6" height="1" fill="#fff"/><rect x="13" y="9" width="1" height="1" fill="#000"/><rect x="0" y="10" width="1" height="1" fill="#000"/><rect x="1" y="10" width="1" height="1" fill="#fff"/><rect x="2" y="10" width="3" height="1" fill="#000080"/><rect x="5" y="10" width="1" height="1" fill="#fff"/><rect x="6" y="10" width="1" height="1" fill="#c0c0c0"/><rect x="7" y="10" width="1" height="1" fill="#fff"/><rect x="8" y="10" width="3" height="1" fill="#000080"/><rect x="11" y="10" width="2" height="1" fill="#fff"/><rect x="13" y="10" width="1" height="1" fill="#000"/><rect x="0" y="11" width="1" height="1" fill="#000"/><rect x="1" y="11" width="5" height="1" fill="#fff"/><rect x="6" y="11" width="1" height="1" fill="#c0c0c0"/><rect x="7" y="11" width="6" height="1" fill="#fff"/><rect x="13" y="11" width="1" height="1" fill="#000"/><rect x="0" y="12" width="14" height="1" fill="#000"/></svg>
<svg class="a" style="left:623px;top:634px" width="16" height="16" shape-rendering="crispEdges"><rect x="15" y="2" width="1" height="1" fill="#fff"/><rect x="14" y="3" width="1" height="1" fill="#fff"/><rect x="15" y="3" width="1" height="1" fill="#d4d0c8"/><rect x="13" y="4" width="1" height="1" fill="#fff"/><rect x="14" y="4" width="1" height="1" fill="#808080"/><rect x="15" y="4" width="1" height="1" fill="#d4d0c8"/><rect x="12" y="5" width="1" height="1" fill="#fff"/><rect x="13" y="5" width="2" height="1" fill="#808080"/><rect x="15" y="5" width="1" height="1" fill="#d4d0c8"/><rect x="11" y="6" width="1" height="1" fill="#fff"/><rect x="12" y="6" width="2" height="1" fill="#808080"/><rect x="14" y="6" width="2" height="1" fill="#d4d0c8"/><rect x="10" y="7" width="1" height="1" fill="#fff"/><rect x="11" y="7" width="2" height="1" fill="#808080"/><rect x="13" y="7" width="1" height="1" fill="#d4d0c8"/><rect x="14" y="7" width="1" height="1" fill="#fff"/><rect x="15" y="7" width="1" height="1" fill="#d4d0c8"/><rect x="9" y="8" width="1" height="1" fill="#fff"/><rect x="10" y="8" width="2" height="1" fill="#808080"/><rect x="12" y="8" width="1" height="1" fill="#d4d0c8"/><rect x="13" y="8" width="1" height="1" fill="#fff"/><rect x="14" y="8" width="1" height="1" fill="#808080"/><rect x="15" y="8" width="1" height="1" fill="#d4d0c8"/><rect x="8" y="9" width="1" height="1" fill="#fff"/><rect x="9" y="9" width="2" height="1" fill="#808080"/><rect x="11" y="9" width="1" height="1" fill="#d4d0c8"/><rect x="12" y="9" width="1" height="1" fill="#fff"/><rect x="13" y="9" width="2" height="1" fill="#808080"/><rect x="15" y="9" width="1" height="1" fill="#d4d0c8"/><rect x="7" y="10" width="1" height="1" fill="#fff"/><rect x="8" y="10" width="2" height="1" fill="#808080"/><rect x="10" y="10" width="1" height="1" fill="#d4d0c8"/><rect x="11" y="10" width="1" height="1" fill="#fff"/><rect x="12" y="10" width="2" height="1" fill="#808080"/><rect x="14" y="10" width="2" height="1" fill="#d4d0c8"/><rect x="6" y="11" width="1" height="1" fill="#fff"/><rect x="7" y="11" width="2" height="1" fill="#808080"/><rect x="9" y="11" width="1" height="1" fill="#d4d0c8"/><rect x="10" y="11" width="1" height="1" fill="#fff"/><rect x="11" y="11" width="2" height="1" fill="#808080"/><rect x="13" y="11" width="1" height="1" fill="#d4d0c8"/><rect x="14" y="11" width="1" height="1" fill="#fff"/><rect x="15" y="11" width="1" height="1" fill="#d4d0c8"/><rect x="5" y="12" width="1" height="1" fill="#fff"/><rect x="6" y="12" width="2" height="1" fill="#808080"/><rect x="8" y="12" width="1" height="1" fill="#d4d0c8"/><rect x="9" y="12" width="1" height="1" fill="#fff"/><rect x="10" y="12" width="2" height="1" fill="#808080"/><rect x="12" y="12" width="1" height="1" fill="#d4d0c8"/><rect x="13" y="12" width="1" height="1" fill="#fff"/><rect x="14" y="12" width="1" height="1" fill="#808080"/><rect x="15" y="12" width="1" height="1" fill="#d4d0c8"/><rect x="4" y="13" width="1" height="1" fill="#fff"/><rect x="5" y="13" width="2" height="1" fill="#808080"/><rect x="7" y="13" width="1" height="1" fill="#d4d0c8"/><rect x="8" y="13" width="1" height="1" fill="#fff"/><rect x="9" y="13" width="2" height="1" fill="#808080"/><rect x="11" y="13" width="1" height="1" fill="#d4d0c8"/><rect x="12" y="13" width="1" height="1" fill="#fff"/><rect x="13" y="13" width="2" height="1" fill="#808080"/><rect x="15" y="13" width="1" height="1" fill="#d4d0c8"/><rect x="3" y="14" width="1" height="1" fill="#fff"/><rect x="4" y="14" width="2" height="1" fill="#808080"/><rect x="6" y="14" width="1" height="1" fill="#d4d0c8"/><rect x="7" y="14" width="1" height="1" fill="#fff"/><rect x="8" y="14" width="2" height="1" fill="#808080"/><rect x="10" y="14" width="1" height="1" fill="#d4d0c8"/><rect x="11" y="14" width="1" height="1" fill="#fff"/><rect x="12" y="14" width="2" height="1" fill="#808080"/><rect x="14" y="14" width="2" height="1" fill="#d4d0c8"/><rect x="2" y="15" width="1" height="1" fill="#fff"/><rect x="3" y="15" width="13" height="1" fill="#d4d0c8"/></svg>
</body></html>
